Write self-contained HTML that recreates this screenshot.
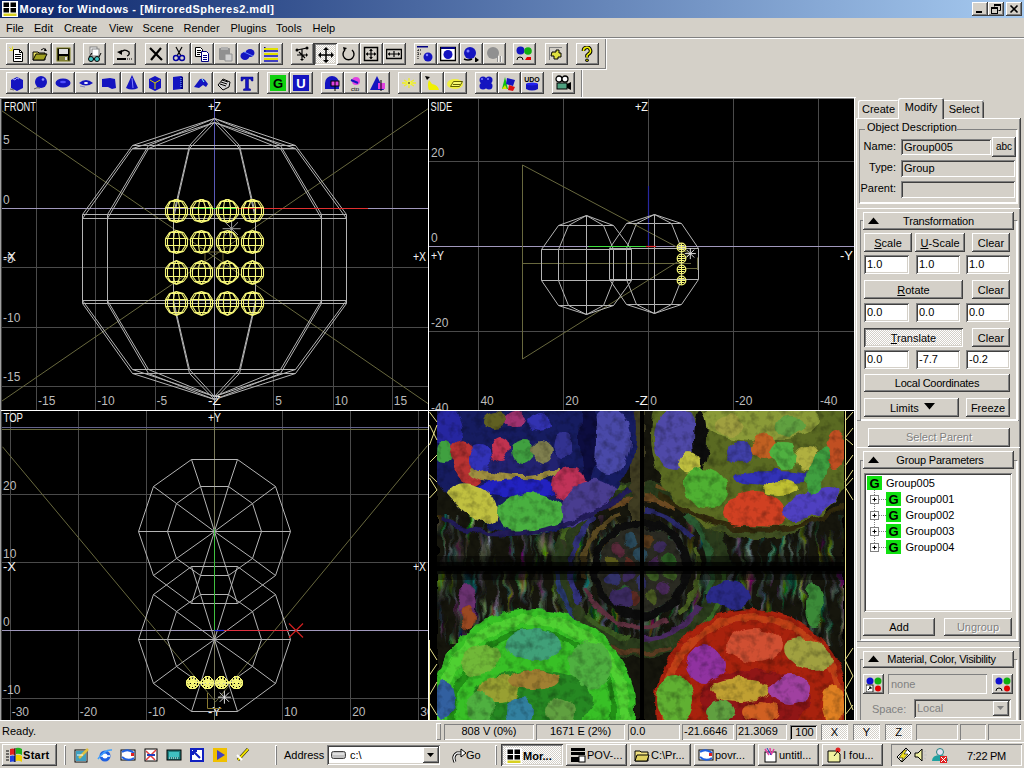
<!DOCTYPE html>
<html><head><meta charset="utf-8"><title>Moray</title>
<style>
html,body{margin:0;padding:0}
body{width:1024px;height:768px;overflow:hidden;background:#d4d0c8;position:relative;font-family:"Liberation Sans",sans-serif;font-size:11px;color:#000}
body>div,body>svg{position:absolute;box-sizing:border-box}
svg{overflow:hidden}
</style></head><body>
<div style="left:0px;top:0px;width:1024px;height:18px;background:linear-gradient(90deg,#0a246a 0%,#a6caf0 100%)"></div>
<svg style="left:2px;top:1px" width="16" height="16" viewBox="0 0 16 16">
<rect x="0" y="0" width="16" height="16" fill="#fff"/>
<rect x="1.5" y="1.5" width="5.5" height="4.5" fill="#000"/><rect x="8.5" y="1.5" width="5.5" height="4.5" fill="#000"/>
<rect x="1.5" y="7" width="5.5" height="4.5" fill="#000"/><rect x="8.5" y="7" width="5.5" height="4.5" fill="#000"/>
<rect x="1.5" y="12.5" width="13" height="2.5" fill="#d8d020"/></svg>
<div style="left:19.5px;top:3.99px;white-space:nowrap;font-size:11px;line-height:11px;color:#fff;font-weight:bold;letter-spacing:0.47px;;">Moray for Windows - [MirroredSpheres2.mdl]</div>
<div style="left:972px;top:2px;width:16px;height:14px;box-shadow:inset -1px -1px #404040,inset 1px 1px #fff,inset -2px -2px #808080;background:#d4d0c8"></div>
<div style="left:988px;top:2px;width:16px;height:14px;box-shadow:inset -1px -1px #404040,inset 1px 1px #fff,inset -2px -2px #808080;background:#d4d0c8"></div>
<div style="left:1006px;top:2px;width:16px;height:14px;box-shadow:inset -1px -1px #404040,inset 1px 1px #fff,inset -2px -2px #808080;background:#d4d0c8"></div>
<svg style="left:972px;top:2px" width="50" height="14"><rect x="4" y="9" width="6" height="2" fill="#000"/><rect x="19.5" y="6.5" width="6" height="5" fill="none" stroke="#000"/><rect x="19" y="5" width="7" height="2" fill="#000"/><path d="M22.5 4.5V3.5h6v5h-2" fill="none" stroke="#000"/><rect x="22" y="2" width="7" height="2" fill="#000"/><path d="M38.5 3.5l7 7M45.5 3.5l-7 7" stroke="#000" stroke-width="1.6"/></svg>
<div style="left:6px;top:22.69px;white-space:nowrap;font-size:11px;line-height:11px;color:#000;;">File</div>
<div style="left:34px;top:22.69px;white-space:nowrap;font-size:11px;line-height:11px;color:#000;;">Edit</div>
<div style="left:64px;top:22.69px;white-space:nowrap;font-size:11px;line-height:11px;color:#000;;">Create</div>
<div style="left:109px;top:22.69px;white-space:nowrap;font-size:11px;line-height:11px;color:#000;;">View</div>
<div style="left:142.5px;top:22.69px;white-space:nowrap;font-size:11px;line-height:11px;color:#000;;">Scene</div>
<div style="left:183.5px;top:22.69px;white-space:nowrap;font-size:11px;line-height:11px;color:#000;;">Render</div>
<div style="left:230.5px;top:22.69px;white-space:nowrap;font-size:11px;line-height:11px;color:#000;;">Plugins</div>
<div style="left:276px;top:22.69px;white-space:nowrap;font-size:11px;line-height:11px;color:#000;;">Tools</div>
<div style="left:312.5px;top:22.69px;white-space:nowrap;font-size:11px;line-height:11px;color:#000;;">Help</div>
<div style="left:0px;top:37px;width:1024px;height:1px;background:#808080"></div>
<div style="left:0px;top:38px;width:1024px;height:1px;background:#fff"></div>
<div style="left:0px;top:68px;width:606px;height:1px;background:#808080"></div>
<div style="left:0px;top:69px;width:607px;height:1px;background:#fff"></div>
<div style="left:605px;top:39px;width:1px;height:30px;background:#808080"></div>
<div style="left:606px;top:39px;width:1px;height:31px;background:#fff"></div>
<div style="left:581px;top:70px;width:1px;height:27px;background:#808080"></div>
<div style="left:582px;top:70px;width:1px;height:27px;background:#fff"></div>
<div style="left:0px;top:97px;width:856px;height:1px;background:#fff"></div>
<div style="left:6px;top:43px;width:23px;height:22px;box-shadow:inset -1px -1px #404040,inset 1px 1px #fff,inset -2px -2px #808080;background:#d4d0c8"></div>
<svg style="left:9px;top:46px" width="16" height="16" viewBox="0 0 16 16"><path d="M4.5 3.5h6l3 3v9h-9z" fill="#fff" stroke="#000"/><path d="M10.5 3.5v3h3" fill="none" stroke="#000"/><path d="M6 8.5h6M6 10.5h6M6 12.5h6" stroke="#000"/><path d="M0.5 1.5l3 3M3.5 0.5v3M0.5 4.5h3" stroke="#e8e020"/></svg>
<div style="left:29px;top:43px;width:23px;height:22px;box-shadow:inset -1px -1px #404040,inset 1px 1px #fff,inset -2px -2px #808080;background:#d4d0c8"></div>
<svg style="left:32px;top:46px" width="16" height="16" viewBox="0 0 16 16"><path d="M1 6h5l1 1h6v7H1z" fill="#e8e060" stroke="#000"/><path d="M1 14l3-6h11l-3 6z" fill="#a0a020" stroke="#000"/><path d="M9 4q3-3 5 0" fill="none" stroke="#000"/><path d="M13 2l2 3h-3z" fill="#000"/></svg>
<div style="left:52px;top:43px;width:23px;height:22px;box-shadow:inset -1px -1px #404040,inset 1px 1px #fff,inset -2px -2px #808080;background:#d4d0c8"></div>
<svg style="left:55px;top:46px" width="16" height="16" viewBox="0 0 16 16"><rect x="2" y="2" width="13" height="13" fill="#000"/><rect x="4" y="3" width="9" height="5" fill="#e0e0e0"/><rect x="4" y="10" width="9" height="5" fill="#808040"/><rect x="10" y="11" width="2" height="3" fill="#e0e0e0"/><rect x="2" y="2" width="13" height="13" fill="none" stroke="#808020"/></svg>
<div style="left:83px;top:43px;width:23px;height:22px;box-shadow:inset -1px -1px #404040,inset 1px 1px #fff,inset -2px -2px #808080;background:#d4d0c8"></div>
<svg style="left:86px;top:46px" width="16" height="16" viewBox="0 0 16 16"><rect x="4" y="1" width="7" height="7" fill="#fff" stroke="#808080"/><rect x="6" y="3" width="7" height="7" fill="#fff" stroke="#808080"/><circle cx="5" cy="13" r="2.5" fill="#40c0c0" stroke="#000"/><circle cx="11" cy="13" r="2.5" fill="#40c0c0" stroke="#000"/><path d="M7 13h2M3 11l3-4M13 11l2-4" stroke="#000"/></svg>
<div style="left:113px;top:43px;width:23px;height:22px;box-shadow:inset -1px -1px #404040,inset 1px 1px #fff,inset -2px -2px #808080;background:#d4d0c8"></div>
<svg style="left:116px;top:46px" width="16" height="16" viewBox="0 0 16 16"><path d="M4 7q4-5 9-1q1 3-2 4" fill="none" stroke="#000" stroke-width="1.3"/><path d="M1 6l5-2v5z" fill="#000"/><rect x="1" y="12" width="9" height="2" fill="#000"/><path d="M11 13h5" stroke="#000" stroke-dasharray="1 1"/></svg>
<div style="left:145px;top:43px;width:23px;height:22px;box-shadow:inset -1px -1px #404040,inset 1px 1px #fff,inset -2px -2px #808080;background:#d4d0c8"></div>
<svg style="left:148px;top:46px" width="16" height="16" viewBox="0 0 16 16"><path d="M2 2l12 12M13 2L3 14" stroke="#000" stroke-width="2.2"/></svg>
<div style="left:168px;top:43px;width:23px;height:22px;box-shadow:inset -1px -1px #404040,inset 1px 1px #fff,inset -2px -2px #808080;background:#d4d0c8"></div>
<svg style="left:171px;top:46px" width="16" height="16" viewBox="0 0 16 16"><path d="M5 1l5 9M11 1l-5 9" stroke="#000" stroke-width="1.2"/><circle cx="5" cy="12" r="2.5" fill="none" stroke="#0000a0" stroke-width="1.4"/><circle cx="11" cy="12" r="2.5" fill="none" stroke="#0000a0" stroke-width="1.4"/></svg>
<div style="left:191px;top:43px;width:23px;height:22px;box-shadow:inset -1px -1px #404040,inset 1px 1px #fff,inset -2px -2px #808080;background:#d4d0c8"></div>
<svg style="left:194px;top:46px" width="16" height="16" viewBox="0 0 16 16"><path d="M1.5 1.5h5l2 2v7h-7z" fill="#fff" stroke="#000"/><path d="M7.5 5.5h5l2 2v8h-7z" fill="#fff" stroke="#000080"/><path d="M9 9.5h4M9 11.5h4M9 13.5h4" stroke="#000080"/><path d="M3 4.5h4M3 6.5h4M3 8.5h3" stroke="#000"/></svg>
<div style="left:214px;top:43px;width:23px;height:22px;box-shadow:inset -1px -1px #404040,inset 1px 1px #fff,inset -2px -2px #808080;background:#d4d0c8"></div>
<svg style="left:217px;top:46px" width="16" height="16" viewBox="0 0 16 16"><rect x="2" y="2" width="11" height="12" rx="1" fill="#909090"/><rect x="4" y="1" width="7" height="3" fill="#b0b0b0"/><path d="M8 8h7v7H8z" fill="#d0d0d0" stroke="#909090"/></svg>
<div style="left:237px;top:43px;width:23px;height:22px;box-shadow:inset -1px -1px #404040,inset 1px 1px #fff,inset -2px -2px #808080;background:#d4d0c8"></div>
<svg style="left:240px;top:46px" width="16" height="16" viewBox="0 0 16 16"><ellipse cx="5" cy="10" rx="4.5" ry="4" fill="#1414c0"/><ellipse cx="10" cy="7" rx="4.5" ry="4" fill="#1414c0"/><path d="M4 6l9 4" stroke="#6080ff"/></svg>
<div style="left:260px;top:43px;width:23px;height:22px;box-shadow:inset -1px -1px #404040,inset 1px 1px #fff,inset -2px -2px #808080;background:#d4d0c8"></div>
<svg style="left:263px;top:46px" width="16" height="16" viewBox="0 0 16 16"><rect x="1" y="1" width="1.5" height="5" fill="#000080"/><path d="M1 3h14M1 8h14M1 13h14" stroke="#e0e000" stroke-width="2"/><path d="M1 5h14M1 10h14M1 15h14" stroke="#1010c0" stroke-width="1.5"/></svg>
<div style="left:291px;top:43px;width:23px;height:22px;box-shadow:inset -1px -1px #404040,inset 1px 1px #fff,inset -2px -2px #808080;background:#d4d0c8"></div>
<svg style="left:294px;top:46px" width="16" height="16" viewBox="0 0 16 16"><path d="M3 4l10-2M8 3v11M3 9h10M5 6l6 6" stroke="#000" stroke-width="1.2"/><circle cx="3" cy="4" r="1.5"/><circle cx="13" cy="2" r="1.5"/><path d="M8 15l-2-2h4zM14 9l-2-2v4z"/></svg>
<div style="left:314px;top:43px;width:23px;height:22px;box-shadow:inset 1px 1px #404040,inset -1px -1px #fff,inset 2px 2px #808080,inset -2px -2px #d4d0c8;background-color:#fff;background-image:linear-gradient(45deg,#d4d0c8 25%,transparent 25%,transparent 75%,#d4d0c8 75%),linear-gradient(45deg,#d4d0c8 25%,transparent 25%,transparent 75%,#d4d0c8 75%);background-size:2px 2px;background-position:0 0,1px 1px"></div>
<svg style="left:318px;top:47px" width="16" height="16" viewBox="0 0 16 16"><path d="M8 1v14M1 8h14" stroke="#000" stroke-width="1.5"/><path d="M8 0l-3 3h6zM8 16l-3-3h6zM0 8l3-3v6zM16 8l-3-3v6z"/></svg>
<div style="left:337px;top:43px;width:23px;height:22px;box-shadow:inset -1px -1px #404040,inset 1px 1px #fff,inset -2px -2px #808080;background:#d4d0c8"></div>
<svg style="left:340px;top:46px" width="16" height="16" viewBox="0 0 16 16"><path d="M5 4A5.5 5.5 0 1 0 12 4" fill="none" stroke="#000" stroke-width="1.4"/><path d="M3 1l4 1-3 3z"/></svg>
<div style="left:360px;top:43px;width:23px;height:22px;box-shadow:inset -1px -1px #404040,inset 1px 1px #fff,inset -2px -2px #808080;background:#d4d0c8"></div>
<svg style="left:363px;top:46px" width="16" height="16" viewBox="0 0 16 16"><rect x="1.5" y="1.5" width="13" height="13" fill="none" stroke="#000" stroke-width="1.5"/><path d="M8 3v10M3 8h10" stroke="#000" stroke-width="1.2"/><path d="M8 3l-2 2h4zM8 13l-2-2h4zM3 8l2-2v4zM13 8l-2-2v4z"/></svg>
<div style="left:383px;top:43px;width:23px;height:22px;box-shadow:inset -1px -1px #404040,inset 1px 1px #fff,inset -2px -2px #808080;background:#d4d0c8"></div>
<svg style="left:386px;top:46px" width="16" height="16" viewBox="0 0 16 16"><rect x="0.5" y="3.5" width="15" height="9" fill="none" stroke="#000" stroke-width="1.5"/><path d="M8 5v6M2 8h12" stroke="#000" stroke-width="1.2"/><path d="M2 8l2-2v4zM14 8l-2-2v4z"/></svg>
<div style="left:414px;top:43px;width:23px;height:22px;box-shadow:inset -1px -1px #404040,inset 1px 1px #fff,inset -2px -2px #808080;background:#d4d0c8"></div>
<svg style="left:417px;top:46px" width="16" height="16" viewBox="0 0 16 16"><rect x="0" y="0" width="11" height="1.5" fill="#000080"/><path d="M1 4h4M1 4v9M1 8h3" stroke="#000" stroke-dasharray="1 1"/><circle cx="11" cy="11" r="4.5" fill="#1414c0"/><circle cx="10" cy="9" r="1.2" fill="#8080ff"/></svg>
<div style="left:437px;top:43px;width:23px;height:22px;box-shadow:inset -1px -1px #404040,inset 1px 1px #fff,inset -2px -2px #808080;background:#d4d0c8"></div>
<svg style="left:440px;top:46px" width="16" height="16" viewBox="0 0 16 16"><rect x="0.5" y="1.5" width="15" height="13" fill="#fff" stroke="#000" stroke-width="1.5"/><rect x="1" y="1" width="14" height="2" fill="#000080"/><circle cx="8" cy="8.5" r="4.5" fill="#1414c0"/></svg>
<div style="left:460px;top:43px;width:23px;height:22px;box-shadow:inset -1px -1px #404040,inset 1px 1px #fff,inset -2px -2px #808080;background:#d4d0c8"></div>
<svg style="left:463px;top:46px" width="16" height="16" viewBox="0 0 16 16"><circle cx="7" cy="7" r="6" fill="#1414c0"/><circle cx="5" cy="5" r="1.5" fill="#8080ff"/><path d="M12 11l4 3-4 3z"/><path d="M1 13q4 2 8 0" stroke="#000" stroke-width="1.5" fill="none"/></svg>
<div style="left:483px;top:43px;width:23px;height:22px;box-shadow:inset -1px -1px #404040,inset 1px 1px #fff,inset -2px -2px #808080;background:#d4d0c8"></div>
<svg style="left:486px;top:46px" width="16" height="16" viewBox="0 0 16 16"><circle cx="7" cy="7" r="6" fill="#909090"/><path d="M12 10v6M15 10v6" stroke="#fff" stroke-width="1.5"/><path d="M11.5 10v6M14.5 10v6" stroke="#909090"/></svg>
<div style="left:513px;top:43px;width:23px;height:22px;box-shadow:inset -1px -1px #404040,inset 1px 1px #fff,inset -2px -2px #808080;background:#d4d0c8"></div>
<svg style="left:516px;top:46px" width="16" height="16" viewBox="0 0 16 16"><circle cx="4.5" cy="4.5" r="4" fill="#1414c0"/><circle cx="12" cy="5" r="3.8" fill="#10b010"/><path d="M1 14a3 3 0 0 1 6 0" fill="none" stroke="#000"/><path d="M9 14l2-3h4v3z" fill="#e00000"/></svg>
<div style="left:545px;top:43px;width:23px;height:22px;box-shadow:inset -1px -1px #404040,inset 1px 1px #fff,inset -2px -2px #808080;background:#d4d0c8"></div>
<svg style="left:548px;top:46px" width="16" height="16" viewBox="0 0 16 16"><rect x="1" y="1" width="13" height="13" fill="#808080"/><rect x="2" y="2" width="13" height="13" fill="#d4d0c8"/><path d="M4 6h4v-2h3v3h2v4h-3v2H6v-3H3z" fill="#e0e040" stroke="#000"/></svg>
<div style="left:576px;top:43px;width:23px;height:22px;box-shadow:inset -1px -1px #404040,inset 1px 1px #fff,inset -2px -2px #808080;background:#d4d0c8"></div>
<svg style="left:579px;top:46px" width="16" height="16" viewBox="0 0 16 16"><path d="M4.5 5a3.5 3.5 0 1 1 5 3l-1.5 1.5v2" fill="none" stroke="#000" stroke-width="3.6"/><path d="M4.5 5a3.5 3.5 0 1 1 5 3l-1.5 1.5v2" fill="none" stroke="#f0f000" stroke-width="1.6"/><circle cx="8" cy="14.2" r="1.8" fill="#000"/><circle cx="8" cy="14.2" r="0.8" fill="#f0f000"/></svg>
<div style="left:6px;top:72px;width:23px;height:22px;box-shadow:inset -1px -1px #404040,inset 1px 1px #fff,inset -2px -2px #808080;background:#d4d0c8"></div>
<svg style="left:9px;top:75px" width="16" height="16" viewBox="0 0 16 16"><path d="M2 5l6-3 6 3v8l-6 3-6-3z" fill="#1414c0"/><path d="M4 4l2 1 2-2 2 1" stroke="#a0a0ff" fill="none"/><path d="M1 14l4 1" stroke="#606060"/></svg>
<div style="left:29px;top:72px;width:23px;height:22px;box-shadow:inset -1px -1px #404040,inset 1px 1px #fff,inset -2px -2px #808080;background:#d4d0c8"></div>
<svg style="left:32px;top:75px" width="16" height="16" viewBox="0 0 16 16"><circle cx="9" cy="7" r="6" fill="#1414c0"/><circle cx="11" cy="4.5" r="1.3" fill="#9090ff"/><path d="M2 14q3-2 6-1" stroke="#606060" fill="none"/></svg>
<div style="left:52px;top:72px;width:23px;height:22px;box-shadow:inset -1px -1px #404040,inset 1px 1px #fff,inset -2px -2px #808080;background:#d4d0c8"></div>
<svg style="left:55px;top:75px" width="16" height="16" viewBox="0 0 16 16"><ellipse cx="8" cy="8" rx="7.5" ry="4.5" fill="#1414c0"/><ellipse cx="8" cy="7" rx="3" ry="1.2" fill="#5050ff"/></svg>
<div style="left:75px;top:72px;width:23px;height:22px;box-shadow:inset -1px -1px #404040,inset 1px 1px #fff,inset -2px -2px #808080;background:#d4d0c8"></div>
<svg style="left:78px;top:75px" width="16" height="16" viewBox="0 0 16 16"><path d="M1 8q7-6 14 0q-7 5-14 0z" fill="#1414c0"/><ellipse cx="8" cy="8" rx="2" ry="1" fill="#fff"/><path d="M2 11l5 1" stroke="#8080c0"/></svg>
<div style="left:98px;top:72px;width:23px;height:22px;box-shadow:inset -1px -1px #404040,inset 1px 1px #fff,inset -2px -2px #808080;background:#d4d0c8"></div>
<svg style="left:101px;top:75px" width="16" height="16" viewBox="0 0 16 16"><path d="M1 4l8-1 5 1 1 9-4 1-4-2-6 0z" fill="#1414c0"/></svg>
<div style="left:121px;top:72px;width:23px;height:22px;box-shadow:inset -1px -1px #404040,inset 1px 1px #fff,inset -2px -2px #808080;background:#d4d0c8"></div>
<svg style="left:124px;top:75px" width="16" height="16" viewBox="0 0 16 16"><path d="M8 0l6 13q-6 3-12 0z" fill="#1414c0"/><path d="M8 3l1 10" stroke="#8080ff"/></svg>
<div style="left:144px;top:72px;width:23px;height:22px;box-shadow:inset -1px -1px #404040,inset 1px 1px #fff,inset -2px -2px #808080;background:#d4d0c8"></div>
<svg style="left:147px;top:75px" width="16" height="16" viewBox="0 0 16 16"><path d="M2 4l6-3 6 3v9l-6 3-6-3z" fill="#1414c0"/><path d="M8 8v6M8 8l5-3M8 8l-5-3" stroke="#d0d000"/></svg>
<div style="left:167px;top:72px;width:23px;height:22px;box-shadow:inset -1px -1px #404040,inset 1px 1px #fff,inset -2px -2px #808080;background:#d4d0c8"></div>
<svg style="left:170px;top:75px" width="16" height="16" viewBox="0 0 16 16"><path d="M3 2l8-1v13l-8 1z" fill="#1414c0"/><path d="M11 1l2 1v12l-2 0" fill="#000080"/><path d="M11 3v10" stroke="#80c0ff" stroke-dasharray="1 1"/></svg>
<div style="left:190px;top:72px;width:23px;height:22px;box-shadow:inset -1px -1px #404040,inset 1px 1px #fff,inset -2px -2px #808080;background:#d4d0c8"></div>
<svg style="left:193px;top:75px" width="16" height="16" viewBox="0 0 16 16"><path d="M1 12l6-8q3-1 5 1l3 4-2 3-3-2-4 3z" fill="#1414c0"/><path d="M9 4l2 3" stroke="#80ffff"/></svg>
<div style="left:213px;top:72px;width:23px;height:22px;box-shadow:inset -1px -1px #404040,inset 1px 1px #fff,inset -2px -2px #808080;background:#d4d0c8"></div>
<svg style="left:216px;top:75px" width="16" height="16" viewBox="0 0 16 16"><path d="M2 10l5-6 7 3-1 5-6 3z" fill="#d0d0d0" stroke="#000"/><path d="M4 9l6 2M5 7l6 2M6 5l6 2" stroke="#000"/></svg>
<div style="left:236px;top:72px;width:23px;height:22px;box-shadow:inset -1px -1px #404040,inset 1px 1px #fff,inset -2px -2px #808080;background:#d4d0c8"></div>
<svg style="left:239px;top:75px" width="16" height="16" viewBox="0 0 16 16"><path d="M2 2h12v4h-1.5l-1-2H9.5v9.5l2 .5v1.5h-7V14l2-.5V4H4.5l-1 2H2z" fill="#1414c0" stroke="#000080" stroke-width=".5"/></svg>
<div style="left:267px;top:72px;width:23px;height:22px;box-shadow:inset -1px -1px #404040,inset 1px 1px #fff,inset -2px -2px #808080;background:#d4d0c8"></div>
<svg style="left:270px;top:75px" width="16" height="16" viewBox="0 0 16 16"><rect x="0" y="0" width="16" height="16" fill="#10d010"/><text x="8" y="13" font-family="Liberation Sans" font-weight="bold" font-size="13" text-anchor="middle" fill="#000">G</text></svg>
<div style="left:290px;top:72px;width:23px;height:22px;box-shadow:inset -1px -1px #404040,inset 1px 1px #fff,inset -2px -2px #808080;background:#d4d0c8"></div>
<svg style="left:293px;top:75px" width="16" height="16" viewBox="0 0 16 16"><rect x="0" y="0" width="16" height="16" fill="#1414c0"/><text x="8" y="13" font-family="Liberation Sans" font-weight="bold" font-size="13" text-anchor="middle" fill="#fff">U</text></svg>
<div style="left:321px;top:72px;width:23px;height:22px;box-shadow:inset -1px -1px #404040,inset 1px 1px #fff,inset -2px -2px #808080;background:#d4d0c8"></div>
<svg style="left:324px;top:75px" width="16" height="16" viewBox="0 0 16 16"><path d="M1 14V8a7 7 0 0 1 14 0v6z" fill="#1414c0"/><rect x="7" y="6" width="8" height="5" fill="#e040e0" stroke="#000"/><path d="M11 6v10" stroke="#000"/></svg>
<div style="left:344px;top:72px;width:23px;height:22px;box-shadow:inset -1px -1px #404040,inset 1px 1px #fff,inset -2px -2px #808080;background:#d4d0c8"></div>
<svg style="left:347px;top:75px" width="16" height="16" viewBox="0 0 16 16"><circle cx="9" cy="6" r="4" fill="#e040e0"/><path d="M4 5l7 3" stroke="#1414c0" stroke-width="2"/><text x="8" y="16" font-size="6" font-family="Liberation Sans" text-anchor="middle">ctp</text></svg>
<div style="left:367px;top:72px;width:23px;height:22px;box-shadow:inset -1px -1px #404040,inset 1px 1px #fff,inset -2px -2px #808080;background:#d4d0c8"></div>
<svg style="left:370px;top:75px" width="16" height="16" viewBox="0 0 16 16"><path d="M7 1l7 14H0z" fill="#1414c0"/><path d="M8 8h7v6H8z" fill="#e040e0"/><path d="M11 5v11" stroke="#000"/></svg>
<div style="left:398px;top:72px;width:23px;height:22px;box-shadow:inset -1px -1px #404040,inset 1px 1px #fff,inset -2px -2px #808080;background:#d4d0c8"></div>
<svg style="left:401px;top:75px" width="16" height="16" viewBox="0 0 16 16"><path d="M8 3v10M1 8h14M3 5l10 6M13 5L3 11" stroke="#f0f020" stroke-width="1.3"/><circle cx="8" cy="8" r="2.5" fill="#f0f060"/><circle cx="8" cy="8" r="0.8" fill="#000"/></svg>
<div style="left:421px;top:72px;width:23px;height:22px;box-shadow:inset -1px -1px #404040,inset 1px 1px #fff,inset -2px -2px #808080;background:#d4d0c8"></div>
<svg style="left:424px;top:75px" width="16" height="16" viewBox="0 0 16 16"><path d="M1 1l5 1-3 3z" fill="#000"/><path d="M5 5l3 4q6 1 7 6H5q-2-5 0-10z" fill="#f0f000"/></svg>
<div style="left:444px;top:72px;width:23px;height:22px;box-shadow:inset -1px -1px #404040,inset 1px 1px #fff,inset -2px -2px #808080;background:#d4d0c8"></div>
<svg style="left:447px;top:75px" width="16" height="16" viewBox="0 0 16 16"><ellipse cx="8" cy="9" rx="8" ry="5" fill="#f0f040"/><path d="M3.5 11.5l3-5h9l-3 5z" fill="#f8f870" stroke="#606000"/><path d="M6 9.5h7" stroke="#606000"/></svg>
<div style="left:475px;top:72px;width:23px;height:22px;box-shadow:inset -1px -1px #404040,inset 1px 1px #fff,inset -2px -2px #808080;background:#d4d0c8"></div>
<svg style="left:478px;top:75px" width="16" height="16" viewBox="0 0 16 16"><circle cx="5" cy="5" r="3.5" fill="#1414c0"/><circle cx="11" cy="5" r="3.5" fill="#1414c0"/><circle cx="5" cy="11" r="3.5" fill="#1414c0"/><circle cx="11" cy="11" r="3.5" fill="#1414c0"/><circle cx="8" cy="8" r="3" fill="#1414c0"/><circle cx="4" cy="4" r="1" fill="#8080ff"/><circle cx="10" cy="4" r="1" fill="#8080ff"/></svg>
<div style="left:498px;top:72px;width:23px;height:22px;box-shadow:inset -1px -1px #404040,inset 1px 1px #fff,inset -2px -2px #808080;background:#d4d0c8"></div>
<svg style="left:501px;top:75px" width="16" height="16" viewBox="0 0 16 16"><path d="M4 2l-3 12h6z" fill="#10c010"/><path d="M6 3l8 2-2 6-7-2z" fill="#1414c0"/><path d="M8 10l6 2-2 4-5-1z" fill="#e01010"/><path d="M1 14l3-4 2 4z" fill="#e0e000"/></svg>
<div style="left:521px;top:72px;width:23px;height:22px;box-shadow:inset -1px -1px #404040,inset 1px 1px #fff,inset -2px -2px #808080;background:#d4d0c8"></div>
<svg style="left:524px;top:75px" width="16" height="16" viewBox="0 0 16 16"><text x="8" y="7" font-size="7" font-weight="bold" font-family="Liberation Sans" text-anchor="middle">UDO</text><path d="M2 9h12v5q-6 3-12 0z" fill="#1414c0"/><ellipse cx="8" cy="9" rx="6" ry="1.5" fill="#2020f0"/></svg>
<div style="left:552px;top:72px;width:23px;height:22px;box-shadow:inset -1px -1px #404040,inset 1px 1px #fff,inset -2px -2px #808080;background:#d4d0c8"></div>
<svg style="left:555px;top:75px" width="16" height="16" viewBox="0 0 16 16"><circle cx="4" cy="4" r="3" fill="#fff" stroke="#000" stroke-width="1.3"/><circle cx="10" cy="4" r="3" fill="#fff" stroke="#000" stroke-width="1.3"/><rect x="2" y="8" width="10" height="6" fill="#50a080" stroke="#000"/><path d="M12 9l4-2v8l-4-2z" fill="#000"/></svg>
<div style="left:0px;top:98px;width:856px;height:1px;background:#808080"></div>
<div style="left:0px;top:99px;width:1px;height:622px;background:#a0a0a0"></div>
<div style="left:1px;top:99px;width:1px;height:622px;background:#404040"></div>
<svg style="left:2px;top:99px" width="426" height="311" viewBox="2 99 426 311" font-family="Liberation Sans" shape-rendering="auto" ><rect x="2" y="99" width="426" height="311" fill="#000"/>
<path d="M36.5 99V410" stroke="#4a4a4a"/>
<path d="M95.5 99V410" stroke="#4a4a4a"/>
<path d="M155.5 99V410" stroke="#4a4a4a"/>
<path d="M273.5 99V410" stroke="#4a4a4a"/>
<path d="M333.5 99V410" stroke="#4a4a4a"/>
<path d="M392.5 99V410" stroke="#4a4a4a"/>
<path d="M1 149.5H428" stroke="#4a4a4a"/>
<path d="M1 267.5H428" stroke="#4a4a4a"/>
<path d="M1 327.5H428" stroke="#4a4a4a"/>
<path d="M1 386.5H428" stroke="#4a4a4a"/>
<path d="M1 208.5H428" stroke="#a098bc"/>
<path d="M214.5 99V208" stroke="#5a5ab8"/>
<path d="M214.5 209V410" stroke="#a0a0b0"/>
<text x="4" y="110.8" font-size="12" fill="#f4f4f4" text-anchor="start" textLength="32" lengthAdjust="spacingAndGlyphs">FRONT</text>
<text x="3" y="144.2" font-size="12" fill="#bcbcbc" text-anchor="start">5</text>
<text x="3" y="203.5" font-size="12" fill="#bcbcbc" text-anchor="start">0</text>
<text x="3" y="262.8" font-size="12" fill="#bcbcbc" text-anchor="start">-5</text>
<text x="3" y="322.1" font-size="12" fill="#bcbcbc" text-anchor="start">-10</text>
<text x="3" y="381.4" font-size="12" fill="#bcbcbc" text-anchor="start">-15</text>
<text x="38.00000000000003" y="405" font-size="12" fill="#bcbcbc" text-anchor="start">-15</text>
<text x="97.30000000000001" y="405" font-size="12" fill="#bcbcbc" text-anchor="start">-10</text>
<text x="156.60000000000002" y="405" font-size="12" fill="#bcbcbc" text-anchor="start">-5</text>
<text x="275.2" y="405" font-size="12" fill="#bcbcbc" text-anchor="start">5</text>
<text x="334.5" y="405" font-size="12" fill="#bcbcbc" text-anchor="start">10</text>
<text x="393.79999999999995" y="405" font-size="12" fill="#bcbcbc" text-anchor="start">15</text>
<text x="208" y="110.8" font-size="12" fill="#f4f4f4" text-anchor="start" textLength="13" lengthAdjust="spacingAndGlyphs">+Z</text>
<text x="208" y="405" font-size="12" fill="#f4f4f4" text-anchor="start" textLength="13" lengthAdjust="spacingAndGlyphs">-Z</text>
<text x="3" y="260.5" font-size="12" fill="#f4f4f4" text-anchor="start" textLength="13" lengthAdjust="spacingAndGlyphs">-X</text>
<text x="413" y="260.5" font-size="12" fill="#f4f4f4" text-anchor="start" textLength="13" lengthAdjust="spacingAndGlyphs">+X</text>
<path d="M2.00 110.91L428.00 403.58" stroke="#68683e" stroke-width="1" />
<path d="M2.00 400.99L428.00 108.75" stroke="#68683e" stroke-width="1" />
<path d="M239.5 373.5L280.5 373.5M280.5 373.5L295.5 373.5M239.5 373.5L189.5 373.5M189.5 373.5L148.5 373.5M148.5 373.5L132.5 373.5M255.5 303.5L321.5 303.5M321.5 303.5L346.5 303.5M255.5 303.5L173.5 303.5M173.5 303.5L107.5 303.5M107.5 303.5L82.5 303.5M255.5 218.5L321.5 218.5M321.5 218.5L346.5 218.5M255.5 218.5L173.5 218.5M173.5 218.5L107.5 218.5M107.5 218.5L82.5 218.5M239.5 148.5L280.5 148.5M280.5 148.5L295.5 148.5M239.5 148.5L189.5 148.5M189.5 148.5L148.5 148.5M148.5 148.5L132.5 148.5M214.5 399.5L239.5 373.5M239.5 373.5L255.5 303.5M255.5 303.5L255.5 218.5M255.5 218.5L239.5 148.5M239.5 148.5L214.5 122.5M214.5 399.5L280.5 373.5M280.5 373.5L321.5 303.5M321.5 303.5L321.5 218.5M321.5 218.5L280.5 148.5M280.5 148.5L214.5 122.5M214.5 399.5L295.5 373.5M295.5 373.5L346.5 303.5M346.5 303.5L346.5 218.5M346.5 218.5L295.5 148.5M295.5 148.5L214.5 122.5M214.5 399.5L189.5 373.5M189.5 373.5L173.5 303.5M173.5 303.5L173.5 218.5M173.5 218.5L189.5 148.5M189.5 148.5L214.5 122.5M214.5 399.5L148.5 373.5M148.5 373.5L107.5 303.5M107.5 303.5L107.5 218.5M107.5 218.5L148.5 148.5M148.5 148.5L214.5 122.5M214.5 399.5L132.5 373.5M132.5 373.5L82.5 303.5M82.5 303.5L82.5 218.5M82.5 218.5L132.5 148.5M132.5 148.5L214.5 122.5M239.5 369.5L280.5 369.5M280.5 369.5L295.5 369.5M239.5 369.5L189.5 369.5M189.5 369.5L148.5 369.5M148.5 369.5L132.5 369.5M255.5 300.5L321.5 300.5M321.5 300.5L346.5 300.5M255.5 300.5L173.5 300.5M173.5 300.5L107.5 300.5M107.5 300.5L82.5 300.5M255.5 214.5L321.5 214.5M321.5 214.5L346.5 214.5M255.5 214.5L173.5 214.5M173.5 214.5L107.5 214.5M107.5 214.5L82.5 214.5M239.5 145.5L280.5 145.5M280.5 145.5L295.5 145.5M239.5 145.5L189.5 145.5M189.5 145.5L148.5 145.5M148.5 145.5L132.5 145.5M214.5 396.5L239.5 369.5M239.5 369.5L255.5 300.5M255.5 300.5L255.5 214.5M255.5 214.5L239.5 145.5M239.5 145.5L214.5 118.5M214.5 396.5L280.5 369.5M280.5 369.5L321.5 300.5M321.5 300.5L321.5 214.5M321.5 214.5L280.5 145.5M280.5 145.5L214.5 118.5M214.5 396.5L295.5 369.5M295.5 369.5L346.5 300.5M346.5 300.5L346.5 214.5M346.5 214.5L295.5 145.5M295.5 145.5L214.5 118.5M214.5 396.5L189.5 369.5M189.5 369.5L173.5 300.5M173.5 300.5L173.5 214.5M173.5 214.5L189.5 145.5M189.5 145.5L214.5 118.5M214.5 396.5L148.5 369.5M148.5 369.5L107.5 300.5M107.5 300.5L107.5 214.5M107.5 214.5L148.5 145.5M148.5 145.5L214.5 118.5M214.5 396.5L132.5 369.5M132.5 369.5L82.5 300.5M82.5 300.5L82.5 214.5M82.5 214.5L132.5 145.5M132.5 145.5L214.5 118.5" stroke="#b4b4b4" stroke-width="1" fill="none"/>
<path d="M196.00 208.50L237.00 208.50" stroke="#40e040" stroke-width="1.2" />
<path d="M237.00 208.50L368.00 208.50" stroke="#e03030" stroke-width="1.2" />
<path d="M222.6 228.7L240.6 228.7M225.2 222.3L238.0 235.0M231.6 219.7L231.6 237.7M238.0 222.3L225.2 235.0" stroke="#a0a0a0" stroke-width="1"/>
<path d="M205 252h18v16h-18z" stroke="#6a6030" fill="none"/>
<path d="M178.5 220.5L181.5 220.5M181.5 220.5L183.5 220.5M178.5 220.5L174.5 220.5M174.5 220.5L170.5 220.5M170.5 220.5L169.5 220.5M179.5 214.5L185.5 214.5M185.5 214.5L187.5 214.5M179.5 214.5L173.5 214.5M173.5 214.5L167.5 214.5M167.5 214.5L165.5 214.5M179.5 207.5L185.5 207.5M185.5 207.5L187.5 207.5M179.5 207.5L173.5 207.5M173.5 207.5L167.5 207.5M167.5 207.5L165.5 207.5M178.5 201.5L181.5 201.5M181.5 201.5L183.5 201.5M178.5 201.5L174.5 201.5M174.5 201.5L170.5 201.5M170.5 201.5L169.5 201.5M176.5 222.5L178.5 220.5M178.5 220.5L179.5 214.5M179.5 214.5L179.5 207.5M179.5 207.5L178.5 201.5M178.5 201.5L176.5 199.5M176.5 222.5L181.5 220.5M181.5 220.5L185.5 214.5M185.5 214.5L185.5 207.5M185.5 207.5L181.5 201.5M181.5 201.5L176.5 199.5M176.5 222.5L183.5 220.5M183.5 220.5L187.5 214.5M187.5 214.5L187.5 207.5M187.5 207.5L183.5 201.5M183.5 201.5L176.5 199.5M176.5 222.5L174.5 220.5M174.5 220.5L173.5 214.5M173.5 214.5L173.5 207.5M173.5 207.5L174.5 201.5M174.5 201.5L176.5 199.5M176.5 222.5L170.5 220.5M170.5 220.5L167.5 214.5M167.5 214.5L167.5 207.5M167.5 207.5L170.5 201.5M170.5 201.5L176.5 199.5M176.5 222.5L169.5 220.5M169.5 220.5L165.5 214.5M165.5 214.5L165.5 207.5M165.5 207.5L169.5 201.5M169.5 201.5L176.5 199.5M203.5 220.5L207.5 220.5M207.5 220.5L208.5 220.5M203.5 220.5L199.5 220.5M199.5 220.5L196.5 220.5M196.5 220.5L194.5 220.5M205.5 214.5L210.5 214.5M210.5 214.5L212.5 214.5M205.5 214.5L198.5 214.5M198.5 214.5L192.5 214.5M192.5 214.5L190.5 214.5M205.5 207.5L210.5 207.5M210.5 207.5L212.5 207.5M205.5 207.5L198.5 207.5M198.5 207.5L192.5 207.5M192.5 207.5L190.5 207.5M203.5 201.5L207.5 201.5M207.5 201.5L208.5 201.5M203.5 201.5L199.5 201.5M199.5 201.5L196.5 201.5M196.5 201.5L194.5 201.5M201.5 222.5L203.5 220.5M203.5 220.5L205.5 214.5M205.5 214.5L205.5 207.5M205.5 207.5L203.5 201.5M203.5 201.5L201.5 199.5M201.5 222.5L207.5 220.5M207.5 220.5L210.5 214.5M210.5 214.5L210.5 207.5M210.5 207.5L207.5 201.5M207.5 201.5L201.5 199.5M201.5 222.5L208.5 220.5M208.5 220.5L212.5 214.5M212.5 214.5L212.5 207.5M212.5 207.5L208.5 201.5M208.5 201.5L201.5 199.5M201.5 222.5L199.5 220.5M199.5 220.5L198.5 214.5M198.5 214.5L198.5 207.5M198.5 207.5L199.5 201.5M199.5 201.5L201.5 199.5M201.5 222.5L196.5 220.5M196.5 220.5L192.5 214.5M192.5 214.5L192.5 207.5M192.5 207.5L196.5 201.5M196.5 201.5L201.5 199.5M201.5 222.5L194.5 220.5M194.5 220.5L190.5 214.5M190.5 214.5L190.5 207.5M190.5 207.5L194.5 201.5M194.5 201.5L201.5 199.5M229.5 220.5L232.5 220.5M232.5 220.5L233.5 220.5M229.5 220.5L224.5 220.5M224.5 220.5L221.5 220.5M221.5 220.5L220.5 220.5M230.5 214.5L236.5 214.5M236.5 214.5L238.5 214.5M230.5 214.5L223.5 214.5M223.5 214.5L218.5 214.5M218.5 214.5L216.5 214.5M230.5 207.5L236.5 207.5M236.5 207.5L238.5 207.5M230.5 207.5L223.5 207.5M223.5 207.5L218.5 207.5M218.5 207.5L216.5 207.5M229.5 201.5L232.5 201.5M232.5 201.5L233.5 201.5M229.5 201.5L224.5 201.5M224.5 201.5L221.5 201.5M221.5 201.5L220.5 201.5M227.5 222.5L229.5 220.5M229.5 220.5L230.5 214.5M230.5 214.5L230.5 207.5M230.5 207.5L229.5 201.5M229.5 201.5L227.5 199.5M227.5 222.5L232.5 220.5M232.5 220.5L236.5 214.5M236.5 214.5L236.5 207.5M236.5 207.5L232.5 201.5M232.5 201.5L227.5 199.5M227.5 222.5L233.5 220.5M233.5 220.5L238.5 214.5M238.5 214.5L238.5 207.5M238.5 207.5L233.5 201.5M233.5 201.5L227.5 199.5M227.5 222.5L224.5 220.5M224.5 220.5L223.5 214.5M223.5 214.5L223.5 207.5M223.5 207.5L224.5 201.5M224.5 201.5L227.5 199.5M227.5 222.5L221.5 220.5M221.5 220.5L218.5 214.5M218.5 214.5L218.5 207.5M218.5 207.5L221.5 201.5M221.5 201.5L227.5 199.5M227.5 222.5L220.5 220.5M220.5 220.5L216.5 214.5M216.5 214.5L216.5 207.5M216.5 207.5L220.5 201.5M220.5 201.5L227.5 199.5M254.5 220.5L257.5 220.5M257.5 220.5L259.5 220.5M254.5 220.5L250.5 220.5M250.5 220.5L246.5 220.5M246.5 220.5L245.5 220.5M255.5 214.5L261.5 214.5M261.5 214.5L263.5 214.5M255.5 214.5L248.5 214.5M248.5 214.5L243.5 214.5M243.5 214.5L241.5 214.5M255.5 207.5L261.5 207.5M261.5 207.5L263.5 207.5M255.5 207.5L248.5 207.5M248.5 207.5L243.5 207.5M243.5 207.5L241.5 207.5M254.5 201.5L257.5 201.5M257.5 201.5L259.5 201.5M254.5 201.5L250.5 201.5M250.5 201.5L246.5 201.5M246.5 201.5L245.5 201.5M252.5 222.5L254.5 220.5M254.5 220.5L255.5 214.5M255.5 214.5L255.5 207.5M255.5 207.5L254.5 201.5M254.5 201.5L252.5 199.5M252.5 222.5L257.5 220.5M257.5 220.5L261.5 214.5M261.5 214.5L261.5 207.5M261.5 207.5L257.5 201.5M257.5 201.5L252.5 199.5M252.5 222.5L259.5 220.5M259.5 220.5L263.5 214.5M263.5 214.5L263.5 207.5M263.5 207.5L259.5 201.5M259.5 201.5L252.5 199.5M252.5 222.5L250.5 220.5M250.5 220.5L248.5 214.5M248.5 214.5L248.5 207.5M248.5 207.5L250.5 201.5M250.5 201.5L252.5 199.5M252.5 222.5L246.5 220.5M246.5 220.5L243.5 214.5M243.5 214.5L243.5 207.5M243.5 207.5L246.5 201.5M246.5 201.5L252.5 199.5M252.5 222.5L245.5 220.5M245.5 220.5L241.5 214.5M241.5 214.5L241.5 207.5M241.5 207.5L245.5 201.5M245.5 201.5L252.5 199.5M178.5 251.5L181.5 251.5M181.5 251.5L183.5 251.5M178.5 251.5L174.5 251.5M174.5 251.5L170.5 251.5M170.5 251.5L169.5 251.5M179.5 245.5L185.5 245.5M185.5 245.5L187.5 245.5M179.5 245.5L173.5 245.5M173.5 245.5L167.5 245.5M167.5 245.5L165.5 245.5M179.5 238.5L185.5 238.5M185.5 238.5L187.5 238.5M179.5 238.5L173.5 238.5M173.5 238.5L167.5 238.5M167.5 238.5L165.5 238.5M178.5 232.5L181.5 232.5M181.5 232.5L183.5 232.5M178.5 232.5L174.5 232.5M174.5 232.5L170.5 232.5M170.5 232.5L169.5 232.5M176.5 253.5L178.5 251.5M178.5 251.5L179.5 245.5M179.5 245.5L179.5 238.5M179.5 238.5L178.5 232.5M178.5 232.5L176.5 230.5M176.5 253.5L181.5 251.5M181.5 251.5L185.5 245.5M185.5 245.5L185.5 238.5M185.5 238.5L181.5 232.5M181.5 232.5L176.5 230.5M176.5 253.5L183.5 251.5M183.5 251.5L187.5 245.5M187.5 245.5L187.5 238.5M187.5 238.5L183.5 232.5M183.5 232.5L176.5 230.5M176.5 253.5L174.5 251.5M174.5 251.5L173.5 245.5M173.5 245.5L173.5 238.5M173.5 238.5L174.5 232.5M174.5 232.5L176.5 230.5M176.5 253.5L170.5 251.5M170.5 251.5L167.5 245.5M167.5 245.5L167.5 238.5M167.5 238.5L170.5 232.5M170.5 232.5L176.5 230.5M176.5 253.5L169.5 251.5M169.5 251.5L165.5 245.5M165.5 245.5L165.5 238.5M165.5 238.5L169.5 232.5M169.5 232.5L176.5 230.5M203.5 251.5L207.5 251.5M207.5 251.5L208.5 251.5M203.5 251.5L199.5 251.5M199.5 251.5L196.5 251.5M196.5 251.5L194.5 251.5M205.5 245.5L210.5 245.5M210.5 245.5L212.5 245.5M205.5 245.5L198.5 245.5M198.5 245.5L192.5 245.5M192.5 245.5L190.5 245.5M205.5 238.5L210.5 238.5M210.5 238.5L212.5 238.5M205.5 238.5L198.5 238.5M198.5 238.5L192.5 238.5M192.5 238.5L190.5 238.5M203.5 232.5L207.5 232.5M207.5 232.5L208.5 232.5M203.5 232.5L199.5 232.5M199.5 232.5L196.5 232.5M196.5 232.5L194.5 232.5M201.5 253.5L203.5 251.5M203.5 251.5L205.5 245.5M205.5 245.5L205.5 238.5M205.5 238.5L203.5 232.5M203.5 232.5L201.5 230.5M201.5 253.5L207.5 251.5M207.5 251.5L210.5 245.5M210.5 245.5L210.5 238.5M210.5 238.5L207.5 232.5M207.5 232.5L201.5 230.5M201.5 253.5L208.5 251.5M208.5 251.5L212.5 245.5M212.5 245.5L212.5 238.5M212.5 238.5L208.5 232.5M208.5 232.5L201.5 230.5M201.5 253.5L199.5 251.5M199.5 251.5L198.5 245.5M198.5 245.5L198.5 238.5M198.5 238.5L199.5 232.5M199.5 232.5L201.5 230.5M201.5 253.5L196.5 251.5M196.5 251.5L192.5 245.5M192.5 245.5L192.5 238.5M192.5 238.5L196.5 232.5M196.5 232.5L201.5 230.5M201.5 253.5L194.5 251.5M194.5 251.5L190.5 245.5M190.5 245.5L190.5 238.5M190.5 238.5L194.5 232.5M194.5 232.5L201.5 230.5M229.5 251.5L232.5 251.5M232.5 251.5L233.5 251.5M229.5 251.5L224.5 251.5M224.5 251.5L221.5 251.5M221.5 251.5L220.5 251.5M230.5 245.5L236.5 245.5M236.5 245.5L238.5 245.5M230.5 245.5L223.5 245.5M223.5 245.5L218.5 245.5M218.5 245.5L216.5 245.5M230.5 238.5L236.5 238.5M236.5 238.5L238.5 238.5M230.5 238.5L223.5 238.5M223.5 238.5L218.5 238.5M218.5 238.5L216.5 238.5M229.5 232.5L232.5 232.5M232.5 232.5L233.5 232.5M229.5 232.5L224.5 232.5M224.5 232.5L221.5 232.5M221.5 232.5L220.5 232.5M227.5 253.5L229.5 251.5M229.5 251.5L230.5 245.5M230.5 245.5L230.5 238.5M230.5 238.5L229.5 232.5M229.5 232.5L227.5 230.5M227.5 253.5L232.5 251.5M232.5 251.5L236.5 245.5M236.5 245.5L236.5 238.5M236.5 238.5L232.5 232.5M232.5 232.5L227.5 230.5M227.5 253.5L233.5 251.5M233.5 251.5L238.5 245.5M238.5 245.5L238.5 238.5M238.5 238.5L233.5 232.5M233.5 232.5L227.5 230.5M227.5 253.5L224.5 251.5M224.5 251.5L223.5 245.5M223.5 245.5L223.5 238.5M223.5 238.5L224.5 232.5M224.5 232.5L227.5 230.5M227.5 253.5L221.5 251.5M221.5 251.5L218.5 245.5M218.5 245.5L218.5 238.5M218.5 238.5L221.5 232.5M221.5 232.5L227.5 230.5M227.5 253.5L220.5 251.5M220.5 251.5L216.5 245.5M216.5 245.5L216.5 238.5M216.5 238.5L220.5 232.5M220.5 232.5L227.5 230.5M254.5 251.5L257.5 251.5M257.5 251.5L259.5 251.5M254.5 251.5L250.5 251.5M250.5 251.5L246.5 251.5M246.5 251.5L245.5 251.5M255.5 245.5L261.5 245.5M261.5 245.5L263.5 245.5M255.5 245.5L248.5 245.5M248.5 245.5L243.5 245.5M243.5 245.5L241.5 245.5M255.5 238.5L261.5 238.5M261.5 238.5L263.5 238.5M255.5 238.5L248.5 238.5M248.5 238.5L243.5 238.5M243.5 238.5L241.5 238.5M254.5 232.5L257.5 232.5M257.5 232.5L259.5 232.5M254.5 232.5L250.5 232.5M250.5 232.5L246.5 232.5M246.5 232.5L245.5 232.5M252.5 253.5L254.5 251.5M254.5 251.5L255.5 245.5M255.5 245.5L255.5 238.5M255.5 238.5L254.5 232.5M254.5 232.5L252.5 230.5M252.5 253.5L257.5 251.5M257.5 251.5L261.5 245.5M261.5 245.5L261.5 238.5M261.5 238.5L257.5 232.5M257.5 232.5L252.5 230.5M252.5 253.5L259.5 251.5M259.5 251.5L263.5 245.5M263.5 245.5L263.5 238.5M263.5 238.5L259.5 232.5M259.5 232.5L252.5 230.5M252.5 253.5L250.5 251.5M250.5 251.5L248.5 245.5M248.5 245.5L248.5 238.5M248.5 238.5L250.5 232.5M250.5 232.5L252.5 230.5M252.5 253.5L246.5 251.5M246.5 251.5L243.5 245.5M243.5 245.5L243.5 238.5M243.5 238.5L246.5 232.5M246.5 232.5L252.5 230.5M252.5 253.5L245.5 251.5M245.5 251.5L241.5 245.5M241.5 245.5L241.5 238.5M241.5 238.5L245.5 232.5M245.5 232.5L252.5 230.5M178.5 281.5L181.5 281.5M181.5 281.5L183.5 281.5M178.5 281.5L174.5 281.5M174.5 281.5L170.5 281.5M170.5 281.5L169.5 281.5M179.5 276.5L185.5 276.5M185.5 276.5L187.5 276.5M179.5 276.5L173.5 276.5M173.5 276.5L167.5 276.5M167.5 276.5L165.5 276.5M179.5 268.5L185.5 268.5M185.5 268.5L187.5 268.5M179.5 268.5L173.5 268.5M173.5 268.5L167.5 268.5M167.5 268.5L165.5 268.5M178.5 263.5L181.5 263.5M181.5 263.5L183.5 263.5M178.5 263.5L174.5 263.5M174.5 263.5L170.5 263.5M170.5 263.5L169.5 263.5M176.5 284.5L178.5 281.5M178.5 281.5L179.5 276.5M179.5 276.5L179.5 268.5M179.5 268.5L178.5 263.5M178.5 263.5L176.5 260.5M176.5 284.5L181.5 281.5M181.5 281.5L185.5 276.5M185.5 276.5L185.5 268.5M185.5 268.5L181.5 263.5M181.5 263.5L176.5 260.5M176.5 284.5L183.5 281.5M183.5 281.5L187.5 276.5M187.5 276.5L187.5 268.5M187.5 268.5L183.5 263.5M183.5 263.5L176.5 260.5M176.5 284.5L174.5 281.5M174.5 281.5L173.5 276.5M173.5 276.5L173.5 268.5M173.5 268.5L174.5 263.5M174.5 263.5L176.5 260.5M176.5 284.5L170.5 281.5M170.5 281.5L167.5 276.5M167.5 276.5L167.5 268.5M167.5 268.5L170.5 263.5M170.5 263.5L176.5 260.5M176.5 284.5L169.5 281.5M169.5 281.5L165.5 276.5M165.5 276.5L165.5 268.5M165.5 268.5L169.5 263.5M169.5 263.5L176.5 260.5M203.5 281.5L207.5 281.5M207.5 281.5L208.5 281.5M203.5 281.5L199.5 281.5M199.5 281.5L196.5 281.5M196.5 281.5L194.5 281.5M205.5 276.5L210.5 276.5M210.5 276.5L212.5 276.5M205.5 276.5L198.5 276.5M198.5 276.5L192.5 276.5M192.5 276.5L190.5 276.5M205.5 268.5L210.5 268.5M210.5 268.5L212.5 268.5M205.5 268.5L198.5 268.5M198.5 268.5L192.5 268.5M192.5 268.5L190.5 268.5M203.5 263.5L207.5 263.5M207.5 263.5L208.5 263.5M203.5 263.5L199.5 263.5M199.5 263.5L196.5 263.5M196.5 263.5L194.5 263.5M201.5 284.5L203.5 281.5M203.5 281.5L205.5 276.5M205.5 276.5L205.5 268.5M205.5 268.5L203.5 263.5M203.5 263.5L201.5 260.5M201.5 284.5L207.5 281.5M207.5 281.5L210.5 276.5M210.5 276.5L210.5 268.5M210.5 268.5L207.5 263.5M207.5 263.5L201.5 260.5M201.5 284.5L208.5 281.5M208.5 281.5L212.5 276.5M212.5 276.5L212.5 268.5M212.5 268.5L208.5 263.5M208.5 263.5L201.5 260.5M201.5 284.5L199.5 281.5M199.5 281.5L198.5 276.5M198.5 276.5L198.5 268.5M198.5 268.5L199.5 263.5M199.5 263.5L201.5 260.5M201.5 284.5L196.5 281.5M196.5 281.5L192.5 276.5M192.5 276.5L192.5 268.5M192.5 268.5L196.5 263.5M196.5 263.5L201.5 260.5M201.5 284.5L194.5 281.5M194.5 281.5L190.5 276.5M190.5 276.5L190.5 268.5M190.5 268.5L194.5 263.5M194.5 263.5L201.5 260.5M229.5 281.5L232.5 281.5M232.5 281.5L233.5 281.5M229.5 281.5L224.5 281.5M224.5 281.5L221.5 281.5M221.5 281.5L220.5 281.5M230.5 276.5L236.5 276.5M236.5 276.5L238.5 276.5M230.5 276.5L223.5 276.5M223.5 276.5L218.5 276.5M218.5 276.5L216.5 276.5M230.5 268.5L236.5 268.5M236.5 268.5L238.5 268.5M230.5 268.5L223.5 268.5M223.5 268.5L218.5 268.5M218.5 268.5L216.5 268.5M229.5 263.5L232.5 263.5M232.5 263.5L233.5 263.5M229.5 263.5L224.5 263.5M224.5 263.5L221.5 263.5M221.5 263.5L220.5 263.5M227.5 284.5L229.5 281.5M229.5 281.5L230.5 276.5M230.5 276.5L230.5 268.5M230.5 268.5L229.5 263.5M229.5 263.5L227.5 260.5M227.5 284.5L232.5 281.5M232.5 281.5L236.5 276.5M236.5 276.5L236.5 268.5M236.5 268.5L232.5 263.5M232.5 263.5L227.5 260.5M227.5 284.5L233.5 281.5M233.5 281.5L238.5 276.5M238.5 276.5L238.5 268.5M238.5 268.5L233.5 263.5M233.5 263.5L227.5 260.5M227.5 284.5L224.5 281.5M224.5 281.5L223.5 276.5M223.5 276.5L223.5 268.5M223.5 268.5L224.5 263.5M224.5 263.5L227.5 260.5M227.5 284.5L221.5 281.5M221.5 281.5L218.5 276.5M218.5 276.5L218.5 268.5M218.5 268.5L221.5 263.5M221.5 263.5L227.5 260.5M227.5 284.5L220.5 281.5M220.5 281.5L216.5 276.5M216.5 276.5L216.5 268.5M216.5 268.5L220.5 263.5M220.5 263.5L227.5 260.5M254.5 281.5L257.5 281.5M257.5 281.5L259.5 281.5M254.5 281.5L250.5 281.5M250.5 281.5L246.5 281.5M246.5 281.5L245.5 281.5M255.5 276.5L261.5 276.5M261.5 276.5L263.5 276.5M255.5 276.5L248.5 276.5M248.5 276.5L243.5 276.5M243.5 276.5L241.5 276.5M255.5 268.5L261.5 268.5M261.5 268.5L263.5 268.5M255.5 268.5L248.5 268.5M248.5 268.5L243.5 268.5M243.5 268.5L241.5 268.5M254.5 263.5L257.5 263.5M257.5 263.5L259.5 263.5M254.5 263.5L250.5 263.5M250.5 263.5L246.5 263.5M246.5 263.5L245.5 263.5M252.5 284.5L254.5 281.5M254.5 281.5L255.5 276.5M255.5 276.5L255.5 268.5M255.5 268.5L254.5 263.5M254.5 263.5L252.5 260.5M252.5 284.5L257.5 281.5M257.5 281.5L261.5 276.5M261.5 276.5L261.5 268.5M261.5 268.5L257.5 263.5M257.5 263.5L252.5 260.5M252.5 284.5L259.5 281.5M259.5 281.5L263.5 276.5M263.5 276.5L263.5 268.5M263.5 268.5L259.5 263.5M259.5 263.5L252.5 260.5M252.5 284.5L250.5 281.5M250.5 281.5L248.5 276.5M248.5 276.5L248.5 268.5M248.5 268.5L250.5 263.5M250.5 263.5L252.5 260.5M252.5 284.5L246.5 281.5M246.5 281.5L243.5 276.5M243.5 276.5L243.5 268.5M243.5 268.5L246.5 263.5M246.5 263.5L252.5 260.5M252.5 284.5L245.5 281.5M245.5 281.5L241.5 276.5M241.5 276.5L241.5 268.5M241.5 268.5L245.5 263.5M245.5 263.5L252.5 260.5M178.5 312.5L181.5 312.5M181.5 312.5L183.5 312.5M178.5 312.5L174.5 312.5M174.5 312.5L170.5 312.5M170.5 312.5L169.5 312.5M179.5 306.5L185.5 306.5M185.5 306.5L187.5 306.5M179.5 306.5L173.5 306.5M173.5 306.5L167.5 306.5M167.5 306.5L165.5 306.5M179.5 299.5L185.5 299.5M185.5 299.5L187.5 299.5M179.5 299.5L173.5 299.5M173.5 299.5L167.5 299.5M167.5 299.5L165.5 299.5M178.5 293.5L181.5 293.5M181.5 293.5L183.5 293.5M178.5 293.5L174.5 293.5M174.5 293.5L170.5 293.5M170.5 293.5L169.5 293.5M176.5 315.5L178.5 312.5M178.5 312.5L179.5 306.5M179.5 306.5L179.5 299.5M179.5 299.5L178.5 293.5M178.5 293.5L176.5 291.5M176.5 315.5L181.5 312.5M181.5 312.5L185.5 306.5M185.5 306.5L185.5 299.5M185.5 299.5L181.5 293.5M181.5 293.5L176.5 291.5M176.5 315.5L183.5 312.5M183.5 312.5L187.5 306.5M187.5 306.5L187.5 299.5M187.5 299.5L183.5 293.5M183.5 293.5L176.5 291.5M176.5 315.5L174.5 312.5M174.5 312.5L173.5 306.5M173.5 306.5L173.5 299.5M173.5 299.5L174.5 293.5M174.5 293.5L176.5 291.5M176.5 315.5L170.5 312.5M170.5 312.5L167.5 306.5M167.5 306.5L167.5 299.5M167.5 299.5L170.5 293.5M170.5 293.5L176.5 291.5M176.5 315.5L169.5 312.5M169.5 312.5L165.5 306.5M165.5 306.5L165.5 299.5M165.5 299.5L169.5 293.5M169.5 293.5L176.5 291.5M203.5 312.5L207.5 312.5M207.5 312.5L208.5 312.5M203.5 312.5L199.5 312.5M199.5 312.5L196.5 312.5M196.5 312.5L194.5 312.5M205.5 306.5L210.5 306.5M210.5 306.5L212.5 306.5M205.5 306.5L198.5 306.5M198.5 306.5L192.5 306.5M192.5 306.5L190.5 306.5M205.5 299.5L210.5 299.5M210.5 299.5L212.5 299.5M205.5 299.5L198.5 299.5M198.5 299.5L192.5 299.5M192.5 299.5L190.5 299.5M203.5 293.5L207.5 293.5M207.5 293.5L208.5 293.5M203.5 293.5L199.5 293.5M199.5 293.5L196.5 293.5M196.5 293.5L194.5 293.5M201.5 315.5L203.5 312.5M203.5 312.5L205.5 306.5M205.5 306.5L205.5 299.5M205.5 299.5L203.5 293.5M203.5 293.5L201.5 291.5M201.5 315.5L207.5 312.5M207.5 312.5L210.5 306.5M210.5 306.5L210.5 299.5M210.5 299.5L207.5 293.5M207.5 293.5L201.5 291.5M201.5 315.5L208.5 312.5M208.5 312.5L212.5 306.5M212.5 306.5L212.5 299.5M212.5 299.5L208.5 293.5M208.5 293.5L201.5 291.5M201.5 315.5L199.5 312.5M199.5 312.5L198.5 306.5M198.5 306.5L198.5 299.5M198.5 299.5L199.5 293.5M199.5 293.5L201.5 291.5M201.5 315.5L196.5 312.5M196.5 312.5L192.5 306.5M192.5 306.5L192.5 299.5M192.5 299.5L196.5 293.5M196.5 293.5L201.5 291.5M201.5 315.5L194.5 312.5M194.5 312.5L190.5 306.5M190.5 306.5L190.5 299.5M190.5 299.5L194.5 293.5M194.5 293.5L201.5 291.5M229.5 312.5L232.5 312.5M232.5 312.5L233.5 312.5M229.5 312.5L224.5 312.5M224.5 312.5L221.5 312.5M221.5 312.5L220.5 312.5M230.5 306.5L236.5 306.5M236.5 306.5L238.5 306.5M230.5 306.5L223.5 306.5M223.5 306.5L218.5 306.5M218.5 306.5L216.5 306.5M230.5 299.5L236.5 299.5M236.5 299.5L238.5 299.5M230.5 299.5L223.5 299.5M223.5 299.5L218.5 299.5M218.5 299.5L216.5 299.5M229.5 293.5L232.5 293.5M232.5 293.5L233.5 293.5M229.5 293.5L224.5 293.5M224.5 293.5L221.5 293.5M221.5 293.5L220.5 293.5M227.5 315.5L229.5 312.5M229.5 312.5L230.5 306.5M230.5 306.5L230.5 299.5M230.5 299.5L229.5 293.5M229.5 293.5L227.5 291.5M227.5 315.5L232.5 312.5M232.5 312.5L236.5 306.5M236.5 306.5L236.5 299.5M236.5 299.5L232.5 293.5M232.5 293.5L227.5 291.5M227.5 315.5L233.5 312.5M233.5 312.5L238.5 306.5M238.5 306.5L238.5 299.5M238.5 299.5L233.5 293.5M233.5 293.5L227.5 291.5M227.5 315.5L224.5 312.5M224.5 312.5L223.5 306.5M223.5 306.5L223.5 299.5M223.5 299.5L224.5 293.5M224.5 293.5L227.5 291.5M227.5 315.5L221.5 312.5M221.5 312.5L218.5 306.5M218.5 306.5L218.5 299.5M218.5 299.5L221.5 293.5M221.5 293.5L227.5 291.5M227.5 315.5L220.5 312.5M220.5 312.5L216.5 306.5M216.5 306.5L216.5 299.5M216.5 299.5L220.5 293.5M220.5 293.5L227.5 291.5M254.5 312.5L257.5 312.5M257.5 312.5L259.5 312.5M254.5 312.5L250.5 312.5M250.5 312.5L246.5 312.5M246.5 312.5L245.5 312.5M255.5 306.5L261.5 306.5M261.5 306.5L263.5 306.5M255.5 306.5L248.5 306.5M248.5 306.5L243.5 306.5M243.5 306.5L241.5 306.5M255.5 299.5L261.5 299.5M261.5 299.5L263.5 299.5M255.5 299.5L248.5 299.5M248.5 299.5L243.5 299.5M243.5 299.5L241.5 299.5M254.5 293.5L257.5 293.5M257.5 293.5L259.5 293.5M254.5 293.5L250.5 293.5M250.5 293.5L246.5 293.5M246.5 293.5L245.5 293.5M252.5 315.5L254.5 312.5M254.5 312.5L255.5 306.5M255.5 306.5L255.5 299.5M255.5 299.5L254.5 293.5M254.5 293.5L252.5 291.5M252.5 315.5L257.5 312.5M257.5 312.5L261.5 306.5M261.5 306.5L261.5 299.5M261.5 299.5L257.5 293.5M257.5 293.5L252.5 291.5M252.5 315.5L259.5 312.5M259.5 312.5L263.5 306.5M263.5 306.5L263.5 299.5M263.5 299.5L259.5 293.5M259.5 293.5L252.5 291.5M252.5 315.5L250.5 312.5M250.5 312.5L248.5 306.5M248.5 306.5L248.5 299.5M248.5 299.5L250.5 293.5M250.5 293.5L252.5 291.5M252.5 315.5L246.5 312.5M246.5 312.5L243.5 306.5M243.5 306.5L243.5 299.5M243.5 299.5L246.5 293.5M246.5 293.5L252.5 291.5M252.5 315.5L245.5 312.5M245.5 312.5L241.5 306.5M241.5 306.5L241.5 299.5M241.5 299.5L245.5 293.5M245.5 293.5L252.5 291.5" stroke="#f8f878" stroke-width="1.1" fill="none"/>
</svg>
<svg style="left:429px;top:99px" width="425" height="311" viewBox="429 99 425 311" font-family="Liberation Sans" shape-rendering="auto" ><rect x="429" y="99" width="425" height="311" fill="#000"/>
<path d="M478.5 99V410" stroke="#4a4a4a"/>
<path d="M563.5 99V410" stroke="#4a4a4a"/>
<path d="M733.5 99V410" stroke="#4a4a4a"/>
<path d="M818.5 99V410" stroke="#4a4a4a"/>
<path d="M429 161.5H854" stroke="#4a4a4a"/>
<path d="M429 331.5H854" stroke="#4a4a4a"/>
<path d="M429 416.5H854" stroke="#4a4a4a"/>
<path d="M429 246.5H854" stroke="#a098bc"/>
<path d="M648.5 99V410" stroke="#4a4a4a"/>
<path d="M648.50 186.00L648.50 246.00" stroke="#2828a0" stroke-width="1.2" />
<text x="430.5" y="111" font-size="12" fill="#f4f4f4" text-anchor="start" textLength="21.6" lengthAdjust="spacingAndGlyphs">SIDE</text>
<text x="431" y="157.10000000000002" font-size="12" fill="#bcbcbc" text-anchor="start">20</text>
<text x="431" y="241.9" font-size="12" fill="#bcbcbc" text-anchor="start">0</text>
<text x="431" y="326.7" font-size="12" fill="#bcbcbc" text-anchor="start">-20</text>
<text x="431" y="411.5" font-size="12" fill="#bcbcbc" text-anchor="start">-40</text>
<text x="480.40000000000003" y="405" font-size="12" fill="#bcbcbc" text-anchor="start">40</text>
<text x="565.3000000000001" y="405" font-size="12" fill="#bcbcbc" text-anchor="start">20</text>
<text x="735.1" y="405" font-size="12" fill="#bcbcbc" text-anchor="start">-20</text>
<text x="820.0" y="405" font-size="12" fill="#bcbcbc" text-anchor="start">-40</text>
<text x="650.2" y="405" font-size="12" fill="#bcbcbc" text-anchor="start">0</text>
<text x="635" y="110.8" font-size="12" fill="#f4f4f4" text-anchor="start" textLength="13" lengthAdjust="spacingAndGlyphs">+Z</text>
<text x="635" y="405" font-size="12" fill="#f4f4f4" text-anchor="start" textLength="13" lengthAdjust="spacingAndGlyphs">-Z</text>
<text x="431" y="259.5" font-size="12" fill="#f4f4f4" text-anchor="start" textLength="13" lengthAdjust="spacingAndGlyphs">+Y</text>
<text x="840" y="259.5" font-size="12" fill="#f4f4f4" text-anchor="start" textLength="13" lengthAdjust="spacingAndGlyphs">-Y</text>
<path d="M522.50 165.00L522.50 359.00" stroke="#68683e" stroke-width="1" />
<path d="M522.50 165.00L690.00 254.00" stroke="#68683e" stroke-width="1" />
<path d="M522.50 359.00L690.00 254.00" stroke="#68683e" stroke-width="1" />
<path d="M522.50 263.50L691.00 263.50" stroke="#68683e" stroke-width="1" />
<path d="M686.00 268.50L698.00 268.50" stroke="#68683e" stroke-width="1" />
<path d="M697.50 257.50L697.50 270.00" stroke="#68683e" stroke-width="1" />
<path d="M558.5 305.5L568.5 305.5M568.5 305.5L586.5 305.5M586.5 305.5L603.5 305.5M603.5 305.5L613.5 305.5M613.5 305.5L613.5 305.5M558.5 305.5L558.5 305.5M541.5 280.5L558.5 280.5M558.5 280.5L586.5 280.5M586.5 280.5L613.5 280.5M613.5 280.5L631.5 280.5M631.5 280.5L631.5 280.5M541.5 280.5L541.5 280.5M541.5 249.5L558.5 249.5M558.5 249.5L586.5 249.5M586.5 249.5L613.5 249.5M613.5 249.5L631.5 249.5M631.5 249.5L631.5 249.5M541.5 249.5L541.5 249.5M558.5 225.5L568.5 225.5M568.5 225.5L586.5 225.5M586.5 225.5L603.5 225.5M603.5 225.5L613.5 225.5M613.5 225.5L613.5 225.5M558.5 225.5L558.5 225.5M586.5 314.5L558.5 305.5M558.5 305.5L541.5 280.5M541.5 280.5L541.5 249.5M541.5 249.5L558.5 225.5M558.5 225.5L586.5 215.5M586.5 314.5L568.5 305.5M568.5 305.5L558.5 280.5M558.5 280.5L558.5 249.5M558.5 249.5L568.5 225.5M568.5 225.5L586.5 215.5M586.5 314.5L586.5 305.5M586.5 305.5L586.5 280.5M586.5 280.5L586.5 249.5M586.5 249.5L586.5 225.5M586.5 225.5L586.5 215.5M586.5 314.5L603.5 305.5M603.5 305.5L613.5 280.5M613.5 280.5L613.5 249.5M613.5 249.5L603.5 225.5M603.5 225.5L586.5 215.5M586.5 314.5L613.5 305.5M613.5 305.5L631.5 280.5M631.5 280.5L631.5 249.5M631.5 249.5L613.5 225.5M613.5 225.5L586.5 215.5M626.5 304.5L636.5 304.5M636.5 304.5L654.5 304.5M654.5 304.5L671.5 304.5M671.5 304.5L681.5 304.5M681.5 304.5L681.5 304.5M626.5 304.5L626.5 304.5M609.5 279.5L626.5 279.5M626.5 279.5L654.5 279.5M654.5 279.5L681.5 279.5M681.5 279.5L698.5 279.5M698.5 279.5L698.5 279.5M609.5 279.5L609.5 279.5M609.5 248.5L626.5 248.5M626.5 248.5L654.5 248.5M654.5 248.5L681.5 248.5M681.5 248.5L698.5 248.5M698.5 248.5L698.5 248.5M609.5 248.5L609.5 248.5M626.5 223.5L636.5 223.5M636.5 223.5L654.5 223.5M654.5 223.5L671.5 223.5M671.5 223.5L681.5 223.5M681.5 223.5L681.5 223.5M626.5 223.5L626.5 223.5M654.5 313.5L626.5 304.5M626.5 304.5L609.5 279.5M609.5 279.5L609.5 248.5M609.5 248.5L626.5 223.5M626.5 223.5L654.5 214.5M654.5 313.5L636.5 304.5M636.5 304.5L626.5 279.5M626.5 279.5L626.5 248.5M626.5 248.5L636.5 223.5M636.5 223.5L654.5 214.5M654.5 313.5L654.5 304.5M654.5 304.5L654.5 279.5M654.5 279.5L654.5 248.5M654.5 248.5L654.5 223.5M654.5 223.5L654.5 214.5M654.5 313.5L671.5 304.5M671.5 304.5L681.5 279.5M681.5 279.5L681.5 248.5M681.5 248.5L671.5 223.5M671.5 223.5L654.5 214.5M654.5 313.5L681.5 304.5M681.5 304.5L698.5 279.5M698.5 279.5L698.5 248.5M698.5 248.5L681.5 223.5M681.5 223.5L654.5 214.5" stroke="#b4b4b4" stroke-width="1" fill="none"/>
<path d="M588.50 246.50L646.00 246.50" stroke="#40e040" stroke-width="1.2" />
<path d="M646.00 246.50L656.00 246.50" stroke="#e03030" stroke-width="1.2" />
<path d="M684.8 253.6L695.8 253.6M686.4 249.7L694.2 257.5M690.3 248.1L690.3 259.1M694.2 249.7L686.4 257.5" stroke="#e0e0e0" stroke-width="1"/>
<circle cx="681.5" cy="247.5" r="4.3" stroke="#f8f878" stroke-width="1.2" fill="none"/><path d="M677.5 247.5H685.5M681.5 243.5V251.5M678.5 245.5H684.5M678.5 249.5H684.5" stroke="#f8f878" stroke-width="1"/>
<circle cx="681.5" cy="258.5" r="4.3" stroke="#f8f878" stroke-width="1.2" fill="none"/><path d="M677.5 258.5H685.5M681.5 254.5V262.5M678.5 256.5H684.5M678.5 260.5H684.5" stroke="#f8f878" stroke-width="1"/>
<circle cx="681.5" cy="269.5" r="4.3" stroke="#f8f878" stroke-width="1.2" fill="none"/><path d="M677.5 269.5H685.5M681.5 265.5V273.5M678.5 267.5H684.5M678.5 271.5H684.5" stroke="#f8f878" stroke-width="1"/>
<circle cx="681.5" cy="280.5" r="4.3" stroke="#f8f878" stroke-width="1.2" fill="none"/><path d="M677.5 280.5H685.5M681.5 276.5V284.5M678.5 278.5H684.5M678.5 282.5H684.5" stroke="#f8f878" stroke-width="1"/>
</svg>
<svg style="left:2px;top:411px" width="426" height="309" viewBox="2 411 426 309" font-family="Liberation Sans" shape-rendering="auto" ><rect x="2" y="411" width="426" height="309" fill="#000"/>
<path d="M10.5 411V720" stroke="#4a4a4a"/>
<path d="M78.5 411V720" stroke="#4a4a4a"/>
<path d="M146.5 411V720" stroke="#4a4a4a"/>
<path d="M282.5 411V720" stroke="#4a4a4a"/>
<path d="M350.5 411V720" stroke="#4a4a4a"/>
<path d="M418.5 411V720" stroke="#4a4a4a"/>
<path d="M1 494.5H428" stroke="#4a4a4a"/>
<path d="M1 562.5H428" stroke="#4a4a4a"/>
<path d="M1 698.5H428" stroke="#4a4a4a"/>
<path d="M1 427.5H428" stroke="#64648c"/>
<path d="M1 429.5H428" stroke="#68683e"/>
<path d="M1 630.5H428" stroke="#a098bc"/>
<path d="M214.5 411V720" stroke="#7a7a5c"/>
<text x="3.5" y="422.4" font-size="12" fill="#f4f4f4" text-anchor="start" textLength="19.5" lengthAdjust="spacingAndGlyphs">TOP</text>
<text x="3" y="489.8" font-size="12" fill="#bcbcbc" text-anchor="start">20</text>
<text x="3" y="557.9" font-size="12" fill="#bcbcbc" text-anchor="start">10</text>
<text x="3" y="626.0" font-size="12" fill="#bcbcbc" text-anchor="start">0</text>
<text x="3" y="694.1" font-size="12" fill="#bcbcbc" text-anchor="start">-10</text>
<text x="11.700000000000017" y="715.6" font-size="12" fill="#bcbcbc" text-anchor="start">-30</text>
<text x="79.80000000000001" y="715.6" font-size="12" fill="#bcbcbc" text-anchor="start">-20</text>
<text x="147.9" y="715.6" font-size="12" fill="#bcbcbc" text-anchor="start">-10</text>
<text x="284.1" y="715.6" font-size="12" fill="#bcbcbc" text-anchor="start">10</text>
<text x="352.2" y="715.6" font-size="12" fill="#bcbcbc" text-anchor="start">20</text>
<text x="420.29999999999995" y="715.6" font-size="12" fill="#bcbcbc" text-anchor="start">30</text>
<text x="208" y="422" font-size="12" fill="#f4f4f4" text-anchor="start" textLength="13" lengthAdjust="spacingAndGlyphs">+Y</text>
<text x="208" y="716" font-size="12" fill="#f4f4f4" text-anchor="start" textLength="13" lengthAdjust="spacingAndGlyphs">-Y</text>
<text x="3" y="570.5" font-size="12" fill="#f4f4f4" text-anchor="start" textLength="13" lengthAdjust="spacingAndGlyphs">-X</text>
<text x="413" y="570.5" font-size="12" fill="#f4f4f4" text-anchor="start" textLength="13" lengthAdjust="spacingAndGlyphs">+X</text>
<path d="M2.50 446.75L215.60 701.80" stroke="#68683e" stroke-width="1" />
<path d="M427.50 445.50L215.60 701.80" stroke="#68683e" stroke-width="1" />
<path d="M228.5 486.5L252.5 503.5M252.5 503.5L261.5 531.5M261.5 531.5L252.5 558.5M252.5 558.5L228.5 575.5M228.5 575.5L200.5 575.5M200.5 575.5L176.5 558.5M176.5 558.5L167.5 531.5M167.5 531.5L176.5 503.5M176.5 503.5L200.5 486.5M200.5 486.5L228.5 486.5M237.5 459.5L275.5 486.5M275.5 486.5L290.5 531.5M290.5 531.5L275.5 575.5M275.5 575.5L237.5 603.5M237.5 603.5L191.5 603.5M191.5 603.5L153.5 575.5M153.5 575.5L138.5 531.5M138.5 531.5L153.5 486.5M153.5 486.5L191.5 459.5M191.5 459.5L237.5 459.5M214.5 531.5L228.5 486.5M228.5 486.5L237.5 459.5M237.5 459.5L237.5 459.5M214.5 531.5L252.5 503.5M252.5 503.5L275.5 486.5M275.5 486.5L275.5 486.5M214.5 531.5L261.5 531.5M261.5 531.5L290.5 531.5M290.5 531.5L290.5 531.5M214.5 531.5L252.5 558.5M252.5 558.5L275.5 575.5M275.5 575.5L275.5 575.5M214.5 531.5L228.5 575.5M228.5 575.5L237.5 603.5M237.5 603.5L237.5 603.5M214.5 531.5L200.5 575.5M200.5 575.5L191.5 603.5M191.5 603.5L191.5 603.5M214.5 531.5L176.5 558.5M176.5 558.5L153.5 575.5M153.5 575.5L153.5 575.5M214.5 531.5L167.5 531.5M167.5 531.5L138.5 531.5M138.5 531.5L138.5 531.5M214.5 531.5L176.5 503.5M176.5 503.5L153.5 486.5M153.5 486.5L153.5 486.5M214.5 531.5L200.5 486.5M200.5 486.5L191.5 459.5M191.5 459.5L191.5 459.5M228.5 594.5L252.5 611.5M252.5 611.5L261.5 639.5M261.5 639.5L252.5 666.5M252.5 666.5L228.5 683.5M228.5 683.5L200.5 683.5M200.5 683.5L176.5 666.5M176.5 666.5L167.5 639.5M167.5 639.5L176.5 611.5M176.5 611.5L200.5 594.5M200.5 594.5L228.5 594.5M237.5 566.5L275.5 594.5M275.5 594.5L290.5 639.5M290.5 639.5L275.5 683.5M275.5 683.5L237.5 711.5M237.5 711.5L191.5 711.5M191.5 711.5L153.5 683.5M153.5 683.5L138.5 639.5M138.5 639.5L153.5 594.5M153.5 594.5L191.5 566.5M191.5 566.5L237.5 566.5M214.5 639.5L228.5 594.5M228.5 594.5L237.5 566.5M237.5 566.5L237.5 566.5M214.5 639.5L252.5 611.5M252.5 611.5L275.5 594.5M275.5 594.5L275.5 594.5M214.5 639.5L261.5 639.5M261.5 639.5L290.5 639.5M290.5 639.5L290.5 639.5M214.5 639.5L252.5 666.5M252.5 666.5L275.5 683.5M275.5 683.5L275.5 683.5M214.5 639.5L228.5 683.5M228.5 683.5L237.5 711.5M237.5 711.5L237.5 711.5M214.5 639.5L200.5 683.5M200.5 683.5L191.5 711.5M191.5 711.5L191.5 711.5M214.5 639.5L176.5 666.5M176.5 666.5L153.5 683.5M153.5 683.5L153.5 683.5M214.5 639.5L167.5 639.5M167.5 639.5L138.5 639.5M138.5 639.5L138.5 639.5M214.5 639.5L176.5 611.5M176.5 611.5L153.5 594.5M153.5 594.5L153.5 594.5M214.5 639.5L200.5 594.5M200.5 594.5L191.5 566.5M191.5 566.5L191.5 566.5" stroke="#b4b4b4" stroke-width="1" fill="none"/>
<path d="M214.50 630.50L214.50 529.00" stroke="#40c040" stroke-width="1" />
<path d="M214.50 630.50L224.00 630.50" stroke="#3030e0" stroke-width="1.2" />
<path d="M224.00 630.50L289.00 630.50" stroke="#e03040" stroke-width="1.2" />
<path d="M289 623.5l14 14M303 623.5l-14 14" stroke="#d02020" stroke-width="1.2"/>
<path d="M217.9 697.2L230.9 697.2M219.8 692.6L229.0 701.8M224.4 690.7L224.4 703.7M229.0 692.6L219.8 701.8" stroke="#e0e0e0" stroke-width="1"/>
<path d="M207.5 693v15.5h14" stroke="#8a7a30" fill="none"/>
<path d="M193.5 679.5L195.5 680.5M195.5 680.5L196.5 682.5M196.5 682.5L195.5 685.5M195.5 685.5L193.5 686.5M193.5 686.5L191.5 686.5M191.5 686.5L189.5 685.5M189.5 685.5L188.5 682.5M188.5 682.5L189.5 680.5M189.5 680.5L191.5 679.5M191.5 679.5L193.5 679.5M194.5 676.5L197.5 679.5M197.5 679.5L199.5 682.5M199.5 682.5L197.5 686.5M197.5 686.5L194.5 688.5M194.5 688.5L190.5 688.5M190.5 688.5L187.5 686.5M187.5 686.5L186.5 682.5M186.5 682.5L187.5 679.5M187.5 679.5L190.5 676.5M190.5 676.5L194.5 676.5M192.5 682.5L193.5 679.5M193.5 679.5L194.5 676.5M194.5 676.5L194.5 676.5M192.5 682.5L195.5 680.5M195.5 680.5L197.5 679.5M197.5 679.5L197.5 679.5M192.5 682.5L196.5 682.5M196.5 682.5L199.5 682.5M199.5 682.5L199.5 682.5M192.5 682.5L195.5 685.5M195.5 685.5L197.5 686.5M197.5 686.5L197.5 686.5M192.5 682.5L193.5 686.5M193.5 686.5L194.5 688.5M194.5 688.5L194.5 688.5M192.5 682.5L191.5 686.5M191.5 686.5L190.5 688.5M190.5 688.5L190.5 688.5M192.5 682.5L189.5 685.5M189.5 685.5L187.5 686.5M187.5 686.5L187.5 686.5M192.5 682.5L188.5 682.5M188.5 682.5L186.5 682.5M186.5 682.5L186.5 682.5M192.5 682.5L189.5 680.5M189.5 680.5L187.5 679.5M187.5 679.5L187.5 679.5M192.5 682.5L191.5 679.5M191.5 679.5L190.5 676.5M190.5 676.5L190.5 676.5M208.5 679.5L210.5 680.5M210.5 680.5L211.5 682.5M211.5 682.5L210.5 685.5M210.5 685.5L208.5 686.5M208.5 686.5L206.5 686.5M206.5 686.5L204.5 685.5M204.5 685.5L203.5 682.5M203.5 682.5L204.5 680.5M204.5 680.5L206.5 679.5M206.5 679.5L208.5 679.5M209.5 676.5L212.5 679.5M212.5 679.5L213.5 682.5M213.5 682.5L212.5 686.5M212.5 686.5L209.5 688.5M209.5 688.5L205.5 688.5M205.5 688.5L202.5 686.5M202.5 686.5L200.5 682.5M200.5 682.5L202.5 679.5M202.5 679.5L205.5 676.5M205.5 676.5L209.5 676.5M207.5 682.5L208.5 679.5M208.5 679.5L209.5 676.5M209.5 676.5L209.5 676.5M207.5 682.5L210.5 680.5M210.5 680.5L212.5 679.5M212.5 679.5L212.5 679.5M207.5 682.5L211.5 682.5M211.5 682.5L213.5 682.5M213.5 682.5L213.5 682.5M207.5 682.5L210.5 685.5M210.5 685.5L212.5 686.5M212.5 686.5L212.5 686.5M207.5 682.5L208.5 686.5M208.5 686.5L209.5 688.5M209.5 688.5L209.5 688.5M207.5 682.5L206.5 686.5M206.5 686.5L205.5 688.5M205.5 688.5L205.5 688.5M207.5 682.5L204.5 685.5M204.5 685.5L202.5 686.5M202.5 686.5L202.5 686.5M207.5 682.5L203.5 682.5M203.5 682.5L200.5 682.5M200.5 682.5L200.5 682.5M207.5 682.5L204.5 680.5M204.5 680.5L202.5 679.5M202.5 679.5L202.5 679.5M207.5 682.5L206.5 679.5M206.5 679.5L205.5 676.5M205.5 676.5L205.5 676.5M222.5 679.5L224.5 680.5M224.5 680.5L225.5 682.5M225.5 682.5L224.5 685.5M224.5 685.5L222.5 686.5M222.5 686.5L220.5 686.5M220.5 686.5L218.5 685.5M218.5 685.5L217.5 682.5M217.5 682.5L218.5 680.5M218.5 680.5L220.5 679.5M220.5 679.5L222.5 679.5M223.5 676.5L226.5 679.5M226.5 679.5L228.5 682.5M228.5 682.5L226.5 686.5M226.5 686.5L223.5 688.5M223.5 688.5L219.5 688.5M219.5 688.5L216.5 686.5M216.5 686.5L215.5 682.5M215.5 682.5L216.5 679.5M216.5 679.5L219.5 676.5M219.5 676.5L223.5 676.5M221.5 682.5L222.5 679.5M222.5 679.5L223.5 676.5M223.5 676.5L223.5 676.5M221.5 682.5L224.5 680.5M224.5 680.5L226.5 679.5M226.5 679.5L226.5 679.5M221.5 682.5L225.5 682.5M225.5 682.5L228.5 682.5M228.5 682.5L228.5 682.5M221.5 682.5L224.5 685.5M224.5 685.5L226.5 686.5M226.5 686.5L226.5 686.5M221.5 682.5L222.5 686.5M222.5 686.5L223.5 688.5M223.5 688.5L223.5 688.5M221.5 682.5L220.5 686.5M220.5 686.5L219.5 688.5M219.5 688.5L219.5 688.5M221.5 682.5L218.5 685.5M218.5 685.5L216.5 686.5M216.5 686.5L216.5 686.5M221.5 682.5L217.5 682.5M217.5 682.5L215.5 682.5M215.5 682.5L215.5 682.5M221.5 682.5L218.5 680.5M218.5 680.5L216.5 679.5M216.5 679.5L216.5 679.5M221.5 682.5L220.5 679.5M220.5 679.5L219.5 676.5M219.5 676.5L219.5 676.5M237.5 679.5L239.5 680.5M239.5 680.5L240.5 682.5M240.5 682.5L239.5 685.5M239.5 685.5L237.5 686.5M237.5 686.5L235.5 686.5M235.5 686.5L233.5 685.5M233.5 685.5L232.5 682.5M232.5 682.5L233.5 680.5M233.5 680.5L235.5 679.5M235.5 679.5L237.5 679.5M238.5 676.5L241.5 679.5M241.5 679.5L242.5 682.5M242.5 682.5L241.5 686.5M241.5 686.5L238.5 688.5M238.5 688.5L234.5 688.5M234.5 688.5L231.5 686.5M231.5 686.5L229.5 682.5M229.5 682.5L231.5 679.5M231.5 679.5L234.5 676.5M234.5 676.5L238.5 676.5M236.5 682.5L237.5 679.5M237.5 679.5L238.5 676.5M238.5 676.5L238.5 676.5M236.5 682.5L239.5 680.5M239.5 680.5L241.5 679.5M241.5 679.5L241.5 679.5M236.5 682.5L240.5 682.5M240.5 682.5L242.5 682.5M242.5 682.5L242.5 682.5M236.5 682.5L239.5 685.5M239.5 685.5L241.5 686.5M241.5 686.5L241.5 686.5M236.5 682.5L237.5 686.5M237.5 686.5L238.5 688.5M238.5 688.5L238.5 688.5M236.5 682.5L235.5 686.5M235.5 686.5L234.5 688.5M234.5 688.5L234.5 688.5M236.5 682.5L233.5 685.5M233.5 685.5L231.5 686.5M231.5 686.5L231.5 686.5M236.5 682.5L232.5 682.5M232.5 682.5L229.5 682.5M229.5 682.5L229.5 682.5M236.5 682.5L233.5 680.5M233.5 680.5L231.5 679.5M231.5 679.5L231.5 679.5M236.5 682.5L235.5 679.5M235.5 679.5L234.5 676.5M234.5 676.5L234.5 676.5M193.5 679.5L195.5 680.5M195.5 680.5L196.5 682.5M196.5 682.5L195.5 685.5M195.5 685.5L193.5 686.5M193.5 686.5L191.5 686.5M191.5 686.5L189.5 685.5M189.5 685.5L188.5 682.5M188.5 682.5L189.5 680.5M189.5 680.5L191.5 679.5M191.5 679.5L193.5 679.5M194.5 676.5L197.5 679.5M197.5 679.5L199.5 682.5M199.5 682.5L197.5 686.5M197.5 686.5L194.5 688.5M194.5 688.5L190.5 688.5M190.5 688.5L187.5 686.5M187.5 686.5L186.5 682.5M186.5 682.5L187.5 679.5M187.5 679.5L190.5 676.5M190.5 676.5L194.5 676.5M192.5 682.5L193.5 679.5M193.5 679.5L194.5 676.5M194.5 676.5L194.5 676.5M192.5 682.5L195.5 680.5M195.5 680.5L197.5 679.5M197.5 679.5L197.5 679.5M192.5 682.5L196.5 682.5M196.5 682.5L199.5 682.5M199.5 682.5L199.5 682.5M192.5 682.5L195.5 685.5M195.5 685.5L197.5 686.5M197.5 686.5L197.5 686.5M192.5 682.5L193.5 686.5M193.5 686.5L194.5 688.5M194.5 688.5L194.5 688.5M192.5 682.5L191.5 686.5M191.5 686.5L190.5 688.5M190.5 688.5L190.5 688.5M192.5 682.5L189.5 685.5M189.5 685.5L187.5 686.5M187.5 686.5L187.5 686.5M192.5 682.5L188.5 682.5M188.5 682.5L186.5 682.5M186.5 682.5L186.5 682.5M192.5 682.5L189.5 680.5M189.5 680.5L187.5 679.5M187.5 679.5L187.5 679.5M192.5 682.5L191.5 679.5M191.5 679.5L190.5 676.5M190.5 676.5L190.5 676.5M208.5 679.5L210.5 680.5M210.5 680.5L211.5 682.5M211.5 682.5L210.5 685.5M210.5 685.5L208.5 686.5M208.5 686.5L206.5 686.5M206.5 686.5L204.5 685.5M204.5 685.5L203.5 682.5M203.5 682.5L204.5 680.5M204.5 680.5L206.5 679.5M206.5 679.5L208.5 679.5M209.5 676.5L212.5 679.5M212.5 679.5L213.5 682.5M213.5 682.5L212.5 686.5M212.5 686.5L209.5 688.5M209.5 688.5L205.5 688.5M205.5 688.5L202.5 686.5M202.5 686.5L200.5 682.5M200.5 682.5L202.5 679.5M202.5 679.5L205.5 676.5M205.5 676.5L209.5 676.5M207.5 682.5L208.5 679.5M208.5 679.5L209.5 676.5M209.5 676.5L209.5 676.5M207.5 682.5L210.5 680.5M210.5 680.5L212.5 679.5M212.5 679.5L212.5 679.5M207.5 682.5L211.5 682.5M211.5 682.5L213.5 682.5M213.5 682.5L213.5 682.5M207.5 682.5L210.5 685.5M210.5 685.5L212.5 686.5M212.5 686.5L212.5 686.5M207.5 682.5L208.5 686.5M208.5 686.5L209.5 688.5M209.5 688.5L209.5 688.5M207.5 682.5L206.5 686.5M206.5 686.5L205.5 688.5M205.5 688.5L205.5 688.5M207.5 682.5L204.5 685.5M204.5 685.5L202.5 686.5M202.5 686.5L202.5 686.5M207.5 682.5L203.5 682.5M203.5 682.5L200.5 682.5M200.5 682.5L200.5 682.5M207.5 682.5L204.5 680.5M204.5 680.5L202.5 679.5M202.5 679.5L202.5 679.5M207.5 682.5L206.5 679.5M206.5 679.5L205.5 676.5M205.5 676.5L205.5 676.5M222.5 679.5L224.5 680.5M224.5 680.5L225.5 682.5M225.5 682.5L224.5 685.5M224.5 685.5L222.5 686.5M222.5 686.5L220.5 686.5M220.5 686.5L218.5 685.5M218.5 685.5L217.5 682.5M217.5 682.5L218.5 680.5M218.5 680.5L220.5 679.5M220.5 679.5L222.5 679.5M223.5 676.5L226.5 679.5M226.5 679.5L228.5 682.5M228.5 682.5L226.5 686.5M226.5 686.5L223.5 688.5M223.5 688.5L219.5 688.5M219.5 688.5L216.5 686.5M216.5 686.5L215.5 682.5M215.5 682.5L216.5 679.5M216.5 679.5L219.5 676.5M219.5 676.5L223.5 676.5M221.5 682.5L222.5 679.5M222.5 679.5L223.5 676.5M223.5 676.5L223.5 676.5M221.5 682.5L224.5 680.5M224.5 680.5L226.5 679.5M226.5 679.5L226.5 679.5M221.5 682.5L225.5 682.5M225.5 682.5L228.5 682.5M228.5 682.5L228.5 682.5M221.5 682.5L224.5 685.5M224.5 685.5L226.5 686.5M226.5 686.5L226.5 686.5M221.5 682.5L222.5 686.5M222.5 686.5L223.5 688.5M223.5 688.5L223.5 688.5M221.5 682.5L220.5 686.5M220.5 686.5L219.5 688.5M219.5 688.5L219.5 688.5M221.5 682.5L218.5 685.5M218.5 685.5L216.5 686.5M216.5 686.5L216.5 686.5M221.5 682.5L217.5 682.5M217.5 682.5L215.5 682.5M215.5 682.5L215.5 682.5M221.5 682.5L218.5 680.5M218.5 680.5L216.5 679.5M216.5 679.5L216.5 679.5M221.5 682.5L220.5 679.5M220.5 679.5L219.5 676.5M219.5 676.5L219.5 676.5M237.5 679.5L239.5 680.5M239.5 680.5L240.5 682.5M240.5 682.5L239.5 685.5M239.5 685.5L237.5 686.5M237.5 686.5L235.5 686.5M235.5 686.5L233.5 685.5M233.5 685.5L232.5 682.5M232.5 682.5L233.5 680.5M233.5 680.5L235.5 679.5M235.5 679.5L237.5 679.5M238.5 676.5L241.5 679.5M241.5 679.5L242.5 682.5M242.5 682.5L241.5 686.5M241.5 686.5L238.5 688.5M238.5 688.5L234.5 688.5M234.5 688.5L231.5 686.5M231.5 686.5L229.5 682.5M229.5 682.5L231.5 679.5M231.5 679.5L234.5 676.5M234.5 676.5L238.5 676.5M236.5 682.5L237.5 679.5M237.5 679.5L238.5 676.5M238.5 676.5L238.5 676.5M236.5 682.5L239.5 680.5M239.5 680.5L241.5 679.5M241.5 679.5L241.5 679.5M236.5 682.5L240.5 682.5M240.5 682.5L242.5 682.5M242.5 682.5L242.5 682.5M236.5 682.5L239.5 685.5M239.5 685.5L241.5 686.5M241.5 686.5L241.5 686.5M236.5 682.5L237.5 686.5M237.5 686.5L238.5 688.5M238.5 688.5L238.5 688.5M236.5 682.5L235.5 686.5M235.5 686.5L234.5 688.5M234.5 688.5L234.5 688.5M236.5 682.5L233.5 685.5M233.5 685.5L231.5 686.5M231.5 686.5L231.5 686.5M236.5 682.5L232.5 682.5M232.5 682.5L229.5 682.5M229.5 682.5L229.5 682.5M236.5 682.5L233.5 680.5M233.5 680.5L231.5 679.5M231.5 679.5L231.5 679.5M236.5 682.5L235.5 679.5M235.5 679.5L234.5 676.5M234.5 676.5L234.5 676.5M193.5 679.5L195.5 680.5M195.5 680.5L196.5 682.5M196.5 682.5L195.5 685.5M195.5 685.5L193.5 686.5M193.5 686.5L191.5 686.5M191.5 686.5L189.5 685.5M189.5 685.5L188.5 682.5M188.5 682.5L189.5 680.5M189.5 680.5L191.5 679.5M191.5 679.5L193.5 679.5M194.5 676.5L197.5 679.5M197.5 679.5L199.5 682.5M199.5 682.5L197.5 686.5M197.5 686.5L194.5 688.5M194.5 688.5L190.5 688.5M190.5 688.5L187.5 686.5M187.5 686.5L186.5 682.5M186.5 682.5L187.5 679.5M187.5 679.5L190.5 676.5M190.5 676.5L194.5 676.5M192.5 682.5L193.5 679.5M193.5 679.5L194.5 676.5M194.5 676.5L194.5 676.5M192.5 682.5L195.5 680.5M195.5 680.5L197.5 679.5M197.5 679.5L197.5 679.5M192.5 682.5L196.5 682.5M196.5 682.5L199.5 682.5M199.5 682.5L199.5 682.5M192.5 682.5L195.5 685.5M195.5 685.5L197.5 686.5M197.5 686.5L197.5 686.5M192.5 682.5L193.5 686.5M193.5 686.5L194.5 688.5M194.5 688.5L194.5 688.5M192.5 682.5L191.5 686.5M191.5 686.5L190.5 688.5M190.5 688.5L190.5 688.5M192.5 682.5L189.5 685.5M189.5 685.5L187.5 686.5M187.5 686.5L187.5 686.5M192.5 682.5L188.5 682.5M188.5 682.5L186.5 682.5M186.5 682.5L186.5 682.5M192.5 682.5L189.5 680.5M189.5 680.5L187.5 679.5M187.5 679.5L187.5 679.5M192.5 682.5L191.5 679.5M191.5 679.5L190.5 676.5M190.5 676.5L190.5 676.5M208.5 679.5L210.5 680.5M210.5 680.5L211.5 682.5M211.5 682.5L210.5 685.5M210.5 685.5L208.5 686.5M208.5 686.5L206.5 686.5M206.5 686.5L204.5 685.5M204.5 685.5L203.5 682.5M203.5 682.5L204.5 680.5M204.5 680.5L206.5 679.5M206.5 679.5L208.5 679.5M209.5 676.5L212.5 679.5M212.5 679.5L213.5 682.5M213.5 682.5L212.5 686.5M212.5 686.5L209.5 688.5M209.5 688.5L205.5 688.5M205.5 688.5L202.5 686.5M202.5 686.5L200.5 682.5M200.5 682.5L202.5 679.5M202.5 679.5L205.5 676.5M205.5 676.5L209.5 676.5M207.5 682.5L208.5 679.5M208.5 679.5L209.5 676.5M209.5 676.5L209.5 676.5M207.5 682.5L210.5 680.5M210.5 680.5L212.5 679.5M212.5 679.5L212.5 679.5M207.5 682.5L211.5 682.5M211.5 682.5L213.5 682.5M213.5 682.5L213.5 682.5M207.5 682.5L210.5 685.5M210.5 685.5L212.5 686.5M212.5 686.5L212.5 686.5M207.5 682.5L208.5 686.5M208.5 686.5L209.5 688.5M209.5 688.5L209.5 688.5M207.5 682.5L206.5 686.5M206.5 686.5L205.5 688.5M205.5 688.5L205.5 688.5M207.5 682.5L204.5 685.5M204.5 685.5L202.5 686.5M202.5 686.5L202.5 686.5M207.5 682.5L203.5 682.5M203.5 682.5L200.5 682.5M200.5 682.5L200.5 682.5M207.5 682.5L204.5 680.5M204.5 680.5L202.5 679.5M202.5 679.5L202.5 679.5M207.5 682.5L206.5 679.5M206.5 679.5L205.5 676.5M205.5 676.5L205.5 676.5M222.5 679.5L224.5 680.5M224.5 680.5L225.5 682.5M225.5 682.5L224.5 685.5M224.5 685.5L222.5 686.5M222.5 686.5L220.5 686.5M220.5 686.5L218.5 685.5M218.5 685.5L217.5 682.5M217.5 682.5L218.5 680.5M218.5 680.5L220.5 679.5M220.5 679.5L222.5 679.5M223.5 676.5L226.5 679.5M226.5 679.5L228.5 682.5M228.5 682.5L226.5 686.5M226.5 686.5L223.5 688.5M223.5 688.5L219.5 688.5M219.5 688.5L216.5 686.5M216.5 686.5L215.5 682.5M215.5 682.5L216.5 679.5M216.5 679.5L219.5 676.5M219.5 676.5L223.5 676.5M221.5 682.5L222.5 679.5M222.5 679.5L223.5 676.5M223.5 676.5L223.5 676.5M221.5 682.5L224.5 680.5M224.5 680.5L226.5 679.5M226.5 679.5L226.5 679.5M221.5 682.5L225.5 682.5M225.5 682.5L228.5 682.5M228.5 682.5L228.5 682.5M221.5 682.5L224.5 685.5M224.5 685.5L226.5 686.5M226.5 686.5L226.5 686.5M221.5 682.5L222.5 686.5M222.5 686.5L223.5 688.5M223.5 688.5L223.5 688.5M221.5 682.5L220.5 686.5M220.5 686.5L219.5 688.5M219.5 688.5L219.5 688.5M221.5 682.5L218.5 685.5M218.5 685.5L216.5 686.5M216.5 686.5L216.5 686.5M221.5 682.5L217.5 682.5M217.5 682.5L215.5 682.5M215.5 682.5L215.5 682.5M221.5 682.5L218.5 680.5M218.5 680.5L216.5 679.5M216.5 679.5L216.5 679.5M221.5 682.5L220.5 679.5M220.5 679.5L219.5 676.5M219.5 676.5L219.5 676.5M237.5 679.5L239.5 680.5M239.5 680.5L240.5 682.5M240.5 682.5L239.5 685.5M239.5 685.5L237.5 686.5M237.5 686.5L235.5 686.5M235.5 686.5L233.5 685.5M233.5 685.5L232.5 682.5M232.5 682.5L233.5 680.5M233.5 680.5L235.5 679.5M235.5 679.5L237.5 679.5M238.5 676.5L241.5 679.5M241.5 679.5L242.5 682.5M242.5 682.5L241.5 686.5M241.5 686.5L238.5 688.5M238.5 688.5L234.5 688.5M234.5 688.5L231.5 686.5M231.5 686.5L229.5 682.5M229.5 682.5L231.5 679.5M231.5 679.5L234.5 676.5M234.5 676.5L238.5 676.5M236.5 682.5L237.5 679.5M237.5 679.5L238.5 676.5M238.5 676.5L238.5 676.5M236.5 682.5L239.5 680.5M239.5 680.5L241.5 679.5M241.5 679.5L241.5 679.5M236.5 682.5L240.5 682.5M240.5 682.5L242.5 682.5M242.5 682.5L242.5 682.5M236.5 682.5L239.5 685.5M239.5 685.5L241.5 686.5M241.5 686.5L241.5 686.5M236.5 682.5L237.5 686.5M237.5 686.5L238.5 688.5M238.5 688.5L238.5 688.5M236.5 682.5L235.5 686.5M235.5 686.5L234.5 688.5M234.5 688.5L234.5 688.5M236.5 682.5L233.5 685.5M233.5 685.5L231.5 686.5M231.5 686.5L231.5 686.5M236.5 682.5L232.5 682.5M232.5 682.5L229.5 682.5M229.5 682.5L229.5 682.5M236.5 682.5L233.5 680.5M233.5 680.5L231.5 679.5M231.5 679.5L231.5 679.5M236.5 682.5L235.5 679.5M235.5 679.5L234.5 676.5M234.5 676.5L234.5 676.5M193.5 679.5L195.5 680.5M195.5 680.5L196.5 682.5M196.5 682.5L195.5 685.5M195.5 685.5L193.5 686.5M193.5 686.5L191.5 686.5M191.5 686.5L189.5 685.5M189.5 685.5L188.5 682.5M188.5 682.5L189.5 680.5M189.5 680.5L191.5 679.5M191.5 679.5L193.5 679.5M194.5 676.5L197.5 679.5M197.5 679.5L199.5 682.5M199.5 682.5L197.5 686.5M197.5 686.5L194.5 688.5M194.5 688.5L190.5 688.5M190.5 688.5L187.5 686.5M187.5 686.5L186.5 682.5M186.5 682.5L187.5 679.5M187.5 679.5L190.5 676.5M190.5 676.5L194.5 676.5M192.5 682.5L193.5 679.5M193.5 679.5L194.5 676.5M194.5 676.5L194.5 676.5M192.5 682.5L195.5 680.5M195.5 680.5L197.5 679.5M197.5 679.5L197.5 679.5M192.5 682.5L196.5 682.5M196.5 682.5L199.5 682.5M199.5 682.5L199.5 682.5M192.5 682.5L195.5 685.5M195.5 685.5L197.5 686.5M197.5 686.5L197.5 686.5M192.5 682.5L193.5 686.5M193.5 686.5L194.5 688.5M194.5 688.5L194.5 688.5M192.5 682.5L191.5 686.5M191.5 686.5L190.5 688.5M190.5 688.5L190.5 688.5M192.5 682.5L189.5 685.5M189.5 685.5L187.5 686.5M187.5 686.5L187.5 686.5M192.5 682.5L188.5 682.5M188.5 682.5L186.5 682.5M186.5 682.5L186.5 682.5M192.5 682.5L189.5 680.5M189.5 680.5L187.5 679.5M187.5 679.5L187.5 679.5M192.5 682.5L191.5 679.5M191.5 679.5L190.5 676.5M190.5 676.5L190.5 676.5M208.5 679.5L210.5 680.5M210.5 680.5L211.5 682.5M211.5 682.5L210.5 685.5M210.5 685.5L208.5 686.5M208.5 686.5L206.5 686.5M206.5 686.5L204.5 685.5M204.5 685.5L203.5 682.5M203.5 682.5L204.5 680.5M204.5 680.5L206.5 679.5M206.5 679.5L208.5 679.5M209.5 676.5L212.5 679.5M212.5 679.5L213.5 682.5M213.5 682.5L212.5 686.5M212.5 686.5L209.5 688.5M209.5 688.5L205.5 688.5M205.5 688.5L202.5 686.5M202.5 686.5L200.5 682.5M200.5 682.5L202.5 679.5M202.5 679.5L205.5 676.5M205.5 676.5L209.5 676.5M207.5 682.5L208.5 679.5M208.5 679.5L209.5 676.5M209.5 676.5L209.5 676.5M207.5 682.5L210.5 680.5M210.5 680.5L212.5 679.5M212.5 679.5L212.5 679.5M207.5 682.5L211.5 682.5M211.5 682.5L213.5 682.5M213.5 682.5L213.5 682.5M207.5 682.5L210.5 685.5M210.5 685.5L212.5 686.5M212.5 686.5L212.5 686.5M207.5 682.5L208.5 686.5M208.5 686.5L209.5 688.5M209.5 688.5L209.5 688.5M207.5 682.5L206.5 686.5M206.5 686.5L205.5 688.5M205.5 688.5L205.5 688.5M207.5 682.5L204.5 685.5M204.5 685.5L202.5 686.5M202.5 686.5L202.5 686.5M207.5 682.5L203.5 682.5M203.5 682.5L200.5 682.5M200.5 682.5L200.5 682.5M207.5 682.5L204.5 680.5M204.5 680.5L202.5 679.5M202.5 679.5L202.5 679.5M207.5 682.5L206.5 679.5M206.5 679.5L205.5 676.5M205.5 676.5L205.5 676.5M222.5 679.5L224.5 680.5M224.5 680.5L225.5 682.5M225.5 682.5L224.5 685.5M224.5 685.5L222.5 686.5M222.5 686.5L220.5 686.5M220.5 686.5L218.5 685.5M218.5 685.5L217.5 682.5M217.5 682.5L218.5 680.5M218.5 680.5L220.5 679.5M220.5 679.5L222.5 679.5M223.5 676.5L226.5 679.5M226.5 679.5L228.5 682.5M228.5 682.5L226.5 686.5M226.5 686.5L223.5 688.5M223.5 688.5L219.5 688.5M219.5 688.5L216.5 686.5M216.5 686.5L215.5 682.5M215.5 682.5L216.5 679.5M216.5 679.5L219.5 676.5M219.5 676.5L223.5 676.5M221.5 682.5L222.5 679.5M222.5 679.5L223.5 676.5M223.5 676.5L223.5 676.5M221.5 682.5L224.5 680.5M224.5 680.5L226.5 679.5M226.5 679.5L226.5 679.5M221.5 682.5L225.5 682.5M225.5 682.5L228.5 682.5M228.5 682.5L228.5 682.5M221.5 682.5L224.5 685.5M224.5 685.5L226.5 686.5M226.5 686.5L226.5 686.5M221.5 682.5L222.5 686.5M222.5 686.5L223.5 688.5M223.5 688.5L223.5 688.5M221.5 682.5L220.5 686.5M220.5 686.5L219.5 688.5M219.5 688.5L219.5 688.5M221.5 682.5L218.5 685.5M218.5 685.5L216.5 686.5M216.5 686.5L216.5 686.5M221.5 682.5L217.5 682.5M217.5 682.5L215.5 682.5M215.5 682.5L215.5 682.5M221.5 682.5L218.5 680.5M218.5 680.5L216.5 679.5M216.5 679.5L216.5 679.5M221.5 682.5L220.5 679.5M220.5 679.5L219.5 676.5M219.5 676.5L219.5 676.5M237.5 679.5L239.5 680.5M239.5 680.5L240.5 682.5M240.5 682.5L239.5 685.5M239.5 685.5L237.5 686.5M237.5 686.5L235.5 686.5M235.5 686.5L233.5 685.5M233.5 685.5L232.5 682.5M232.5 682.5L233.5 680.5M233.5 680.5L235.5 679.5M235.5 679.5L237.5 679.5M238.5 676.5L241.5 679.5M241.5 679.5L242.5 682.5M242.5 682.5L241.5 686.5M241.5 686.5L238.5 688.5M238.5 688.5L234.5 688.5M234.5 688.5L231.5 686.5M231.5 686.5L229.5 682.5M229.5 682.5L231.5 679.5M231.5 679.5L234.5 676.5M234.5 676.5L238.5 676.5M236.5 682.5L237.5 679.5M237.5 679.5L238.5 676.5M238.5 676.5L238.5 676.5M236.5 682.5L239.5 680.5M239.5 680.5L241.5 679.5M241.5 679.5L241.5 679.5M236.5 682.5L240.5 682.5M240.5 682.5L242.5 682.5M242.5 682.5L242.5 682.5M236.5 682.5L239.5 685.5M239.5 685.5L241.5 686.5M241.5 686.5L241.5 686.5M236.5 682.5L237.5 686.5M237.5 686.5L238.5 688.5M238.5 688.5L238.5 688.5M236.5 682.5L235.5 686.5M235.5 686.5L234.5 688.5M234.5 688.5L234.5 688.5M236.5 682.5L233.5 685.5M233.5 685.5L231.5 686.5M231.5 686.5L231.5 686.5M236.5 682.5L232.5 682.5M232.5 682.5L229.5 682.5M229.5 682.5L229.5 682.5M236.5 682.5L233.5 680.5M233.5 680.5L231.5 679.5M231.5 679.5L231.5 679.5M236.5 682.5L235.5 679.5M235.5 679.5L234.5 676.5M234.5 676.5L234.5 676.5" stroke="#f8f878" stroke-width="1" fill="none"/>
</svg>
<svg style="left:429px;top:411px" width="425" height="309" viewBox="429 411 425 309" font-family="Liberation Sans" shape-rendering="auto" ><rect x="429" y="411" width="425" height="309" fill="#000"/>
<defs><clipPath id="rclip"><rect x="437" y="411" width="407" height="309"/></clipPath><clipPath id="cTL"><circle cx="530" cy="429" r="106"/></clipPath><clipPath id="cTR"><circle cx="755" cy="435" r="104"/></clipPath><clipPath id="cBL"><circle cx="533" cy="712" r="103"/></clipPath><clipPath id="cBR"><circle cx="752" cy="706" r="97"/></clipPath><filter id="swirl" x="-5%" y="-5%" width="110%" height="110%"><feTurbulence type="fractalNoise" baseFrequency="0.07" numOctaves="2" seed="5" result="t"/><feDisplacementMap in="SourceGraphic" in2="t" scale="10" xChannelSelector="R" yChannelSelector="G"/></filter><filter id="noise" x="0" y="0" width="100%" height="100%"><feTurbulence type="fractalNoise" baseFrequency="0.12" numOctaves="3" seed="3"/><feColorMatrix values="0 0 0 0 0  0 0 0 0 0  0 0 0 0 0  0 0 0 -2 1.1"/></filter><filter id="cnoise" x="0" y="0" width="100%" height="100%"><feTurbulence type="fractalNoise" baseFrequency="0.15" numOctaves="2" seed="11"/><feColorMatrix values="2.5 0 0 0 -0.75  0 2.5 0 0 -0.75  0 0 2.5 0 -0.75  0 0 0 0 0.22"/></filter><filter id="streak" x="0" y="0" width="100%" height="100%"><feTurbulence type="fractalNoise" baseFrequency="0.15 0.03" numOctaves="2" seed="7"/><feColorMatrix values="1.3 0 0 0 -0.4  0 1.9 0 0 -0.45  0 0 1.5 0 -0.45  0 0 0 2.5 -1.15"/></filter></defs>
<g clip-path="url(#rclip)"><g filter="url(#swirl)">
<rect x="437" y="411" width="407" height="309" fill="#141410"/>
<rect x="437" y="515" width="407" height="130" filter="url(#streak)" opacity=".7"/>
<circle cx="641" cy="569" r="80" fill="none" stroke="#2e3e1c" stroke-width="18" opacity=".9"/>
<path d="M562.1 540.3A84 84 0 0 1 626.4 486.3" stroke="#4a6a22" stroke-width="5" fill="none" opacity="1"/>
<path d="M655.6 486.3A84 84 0 0 1 713.7 527.0" stroke="#6a5020" stroke-width="5" fill="none" opacity="1"/>
<path d="M599.0 641.7A84 84 0 0 1 557.0 569.0" stroke="#2a3a70" stroke-width="5" fill="none" opacity="1"/>
<path d="M725.0 569.0A84 84 0 0 1 683.0 641.7" stroke="#3a6a28" stroke-width="5" fill="none" opacity="1"/>
<path d="M669.7 647.9A84 84 0 0 1 612.3 647.9" stroke="#5a3a20" stroke-width="5" fill="none" opacity="1"/>
<path d="M580.4 604.0A70 70 0 0 1 596.0 515.4" stroke="#30307a" stroke-width="6" fill="none" opacity="1"/>
<path d="M606.0 508.4A70 70 0 0 1 676.0 508.4" stroke="#6a4a20" stroke-width="6" fill="none" opacity="1"/>
<path d="M686.0 515.4A70 70 0 0 1 706.8 592.9" stroke="#2a5a30" stroke-width="6" fill="none" opacity="1"/>
<path d="M701.6 604.0A70 70 0 0 1 641.0 639.0" stroke="#4a2a60" stroke-width="6" fill="none" opacity="1"/>
<path d="M628.8 637.9A70 70 0 0 1 587.4 614.0" stroke="#3a5a20" stroke-width="6" fill="none" opacity="1"/>
<path d="M583.9 579.1A58 58 0 0 1 621.2 514.5" stroke="#5a4a20" stroke-width="5" fill="none" opacity="1"/>
<path d="M630.9 511.9A58 58 0 0 1 691.2 540.0" stroke="#2a2a6a" stroke-width="5" fill="none" opacity="1"/>
<path d="M695.5 549.2A58 58 0 0 1 678.3 613.4" stroke="#4a6020" stroke-width="5" fill="none" opacity="1"/>
<path d="M670.0 619.2A58 58 0 0 1 586.5 588.8" stroke="#603040" stroke-width="5" fill="none" opacity="1"/>
<circle cx="641" cy="569" r="46" fill="none" stroke="#0a0a0a" stroke-width="7"/>
<circle cx="641" cy="569" r="42" fill="#2a2c22"/>
<ellipse cx="670.4" cy="575.0" rx="8" ry="6" fill="#3a5a22" transform="rotate(11 670.4 575.0)"/>
<ellipse cx="663.5" cy="588.9" rx="8" ry="6" fill="#4a2a5a" transform="rotate(41 663.5 588.9)"/>
<ellipse cx="650.5" cy="597.4" rx="8" ry="6" fill="#4a5a20" transform="rotate(71 650.5 597.4)"/>
<ellipse cx="635.0" cy="598.4" rx="8" ry="6" fill="#5a2a22" transform="rotate(101 635.0 598.4)"/>
<ellipse cx="621.1" cy="591.5" rx="8" ry="6" fill="#2a5a30" transform="rotate(131 621.1 591.5)"/>
<ellipse cx="612.6" cy="578.5" rx="8" ry="6" fill="#30306a" transform="rotate(161 612.6 578.5)"/>
<ellipse cx="611.6" cy="563.0" rx="8" ry="6" fill="#5a5a1a" transform="rotate(191 611.6 563.0)"/>
<ellipse cx="618.5" cy="549.1" rx="8" ry="6" fill="#5a2a3a" transform="rotate(221 618.5 549.1)"/>
<ellipse cx="631.5" cy="540.6" rx="8" ry="6" fill="#2a4a5a" transform="rotate(251 631.5 540.6)"/>
<ellipse cx="647.0" cy="539.6" rx="8" ry="6" fill="#5a3a1a" transform="rotate(281 647.0 539.6)"/>
<ellipse cx="660.9" cy="546.5" rx="8" ry="6" fill="#3a2a5a" transform="rotate(311 660.9 546.5)"/>
<ellipse cx="669.4" cy="559.5" rx="8" ry="6" fill="#2a5a22" transform="rotate(341 669.4 559.5)"/>
<ellipse cx="653.3" cy="575.7" rx="7" ry="5" fill="#3a5a22" transform="rotate(29 653.3 575.7)"/>
<ellipse cx="641.3" cy="583.0" rx="7" ry="5" fill="#30306a" transform="rotate(89 641.3 583.0)"/>
<ellipse cx="629.0" cy="576.3" rx="7" ry="5" fill="#3a2a5a" transform="rotate(149 629.0 576.3)"/>
<ellipse cx="628.7" cy="562.3" rx="7" ry="5" fill="#5a2a22" transform="rotate(209 628.7 562.3)"/>
<ellipse cx="640.7" cy="555.0" rx="7" ry="5" fill="#2a4a5a" transform="rotate(269 640.7 555.0)"/>
<ellipse cx="653.0" cy="561.7" rx="7" ry="5" fill="#4a2a5a" transform="rotate(329 653.0 561.7)"/>
<ellipse cx="468" cy="606" rx="9" ry="22" fill="#6a3070"/>
<ellipse cx="468" cy="618" rx="8" ry="11" fill="#9a4a20"/>
<ellipse cx="622" cy="598" rx="12" ry="11" fill="#3a2a60"/>
<ellipse cx="730" cy="596" rx="22" ry="14" fill="#2a2a88"/>
<ellipse cx="814" cy="606" rx="9" ry="22" fill="#3a8a38"/>
<ellipse cx="609" cy="440" rx="21" ry="34" fill="#4a48a8"/>
<ellipse cx="675" cy="438" rx="21" ry="32" fill="#5048a8"/>
<rect x="630" y="411" width="14" height="110" fill="#403c20"/>
<circle cx="530" cy="429" r="106" fill="#181c60"/>
<g clip-path="url(#cTL)">
<ellipse cx="448" cy="430" rx="14" ry="22" fill="#2828a0"/>
<ellipse cx="444" cy="452" rx="9" ry="12" fill="#40a040"/>
<ellipse cx="468" cy="463" rx="15" ry="24" fill="#b83030" transform="rotate(-25 468 463)"/>
<ellipse cx="516" cy="419" rx="11" ry="8" fill="#a03070"/>
<ellipse cx="540" cy="422" rx="12" ry="9" fill="#3030b0"/>
<ellipse cx="495" cy="420" rx="12" ry="9" fill="#606020"/>
<ellipse cx="515" cy="470" rx="45" ry="14" fill="#a09040"/>
<ellipse cx="520" cy="462" rx="42" ry="13" fill="#202070"/>
<ellipse cx="480" cy="459" rx="11" ry="14" fill="#3030b8"/>
<ellipse cx="500" cy="449" rx="10" ry="12" fill="#c03050"/>
<ellipse cx="523" cy="451" rx="11" ry="12" fill="#40a040"/>
<ellipse cx="542" cy="452" rx="10" ry="11" fill="#808050"/>
<ellipse cx="563" cy="446" rx="10" ry="12" fill="#303090"/>
<ellipse cx="520" cy="488" rx="42" ry="9" fill="#2020c0"/>
<ellipse cx="472" cy="504" rx="27" ry="19" fill="#c0c040" transform="rotate(25 472 504)"/>
<ellipse cx="530" cy="514" rx="33" ry="21" fill="#48b040"/>
<ellipse cx="571" cy="486" rx="18" ry="19" fill="#c03058"/>
<ellipse cx="590" cy="505" rx="30" ry="25" fill="#4a3c90" transform="rotate(-30 590 505)"/>
<ellipse cx="609" cy="440" rx="21" ry="34" fill="#4a48a8"/>
<ellipse cx="588" cy="440" rx="8" ry="40" fill="#101040"/>
</g>
<circle cx="755" cy="435" r="104" fill="#5a6a22"/>
<g clip-path="url(#cTR)">
<ellipse cx="760" cy="420" rx="60" ry="20" fill="#8a9a38"/>
<ellipse cx="730" cy="425" rx="14" ry="10" fill="#a0a040"/>
<ellipse cx="790" cy="425" rx="14" ry="10" fill="#60a040"/>
<ellipse cx="675" cy="438" rx="21" ry="32" fill="#5048a8"/>
<ellipse cx="700" cy="440" rx="8" ry="30" fill="#101010"/>
<ellipse cx="740" cy="452" rx="14" ry="12" fill="#4040a8"/>
<ellipse cx="765" cy="447" rx="12" ry="12" fill="#c06020"/>
<ellipse cx="784" cy="456" rx="13" ry="14" fill="#50b040"/>
<ellipse cx="807" cy="459" rx="11" ry="13" fill="#b0b040"/>
<ellipse cx="774" cy="478" rx="42" ry="7" fill="#3030b8"/>
<ellipse cx="780" cy="487" rx="18" ry="7" fill="#c0c030"/>
<ellipse cx="690" cy="463" rx="12" ry="10" fill="#c0c040"/>
<ellipse cx="705" cy="488" rx="23" ry="20" fill="#50b030" transform="rotate(30 705 488)"/>
<ellipse cx="755" cy="512" rx="31" ry="21" fill="#d04020"/>
<ellipse cx="811" cy="503" rx="31" ry="12" fill="#5040c0" transform="rotate(-25 811 503)"/>
<ellipse cx="836" cy="450" rx="10" ry="20" fill="#c05020"/>
<ellipse cx="818" cy="470" rx="9" ry="25" fill="#40a040" transform="rotate(20 818 470)"/>
<ellipse cx="740" cy="536" rx="90" ry="10" fill="#405020"/>
</g>
<circle cx="533" cy="712" r="103" fill="#38c028"/>
<g clip-path="url(#cBL)">
<circle cx="533" cy="712" r="92" fill="none" stroke="#50d030" stroke-width="10"/>
<circle cx="533" cy="712" r="80" fill="none" stroke="#209018" stroke-width="6"/>
<ellipse cx="534" cy="645" rx="27" ry="16" fill="#40a078"/>
<ellipse cx="480" cy="660" rx="22" ry="14" fill="#70b838" transform="rotate(-20 480 660)"/>
<ellipse cx="590" cy="665" rx="22" ry="24" fill="#50b040"/>
<ellipse cx="533" cy="700" rx="60" ry="30" fill="#288820"/>
<ellipse cx="500" cy="690" rx="20" ry="14" fill="#98a030"/>
<ellipse cx="533" cy="680" rx="26" ry="10" fill="#a08030"/>
<ellipse cx="480" cy="708" rx="14" ry="16" fill="#50b040"/>
<ellipse cx="520" cy="712" rx="14" ry="14" fill="#3080a0"/>
<ellipse cx="560" cy="712" rx="14" ry="14" fill="#60a040"/>
<ellipse cx="445" cy="700" rx="10" ry="20" fill="#3060a0"/>
</g>
<circle cx="752" cy="706" r="97" fill="#a82010"/>
<g clip-path="url(#cBR)">
<circle cx="752" cy="706" r="88" fill="none" stroke="#c04018" stroke-width="8"/>
<ellipse cx="706" cy="665" rx="20" ry="20" fill="#9030a0"/>
<ellipse cx="755" cy="645" rx="28" ry="17" fill="#d05030"/>
<ellipse cx="808" cy="654" rx="25" ry="14" fill="#a0a040" transform="rotate(20 808 654)"/>
<ellipse cx="675" cy="700" rx="18" ry="26" fill="#60b030"/>
<ellipse cx="755" cy="700" rx="55" ry="30" fill="#901818"/>
<ellipse cx="740" cy="690" rx="30" ry="12" fill="#c0a030"/>
<ellipse cx="790" cy="690" rx="20" ry="15" fill="#a040a0"/>
<ellipse cx="760" cy="712" rx="18" ry="10" fill="#d06020"/>
<ellipse cx="720" cy="712" rx="15" ry="12" fill="#60a040"/>
<ellipse cx="833" cy="705" rx="11" ry="20" fill="#e08020"/>
</g>
<path d="M440 520Q530 560 630 490" stroke="#201a58" stroke-width="5" fill="none"/>
<path d="M660 495Q755 560 844 505" stroke="#302a10" stroke-width="5" fill="none"/>
</g>
<rect x="437" y="411" width="407" height="309" filter="url(#noise)" opacity=".35"/>
<rect x="640" y="411" width="4" height="309" fill="#000"/>
<rect x="437" y="562" width="407" height="12" fill="#000" opacity=".7"/>
<rect x="437" y="566" width="407" height="5" fill="#000"/>
<rect x="437" y="556" width="150" height="24" fill="#000" opacity=".45"/>
<rect x="697" y="556" width="147" height="24" fill="#000" opacity=".45"/>
</g>
<path d="M429.5 412L437 422M429.5 425L437 440M437 425L429.5 445M437 455L430 462M429.5 475L437 482M429.5 478L437 490M437 490L429.5 498M429.5 648L437 660M437 664L429.5 675M437 682L429.5 695M429.5 703L437 715M429.5 640V720" stroke="#e8e08a" stroke-width="1" fill="none"/>
<path d="M845 421L853 412M845 438L853 428M845 438L853 445M845 466L853 455M845 482L853 470M845 487L853 478M845 487L853 500M845 660L853 648M845 660L853 676M845 690L853 676M845 690L853 710M845 715L853 705M845.5 411V720" stroke="#e8e08a" stroke-width="1" fill="none"/>
</svg>
<div style="left:428px;top:99px;width:1px;height:622px;background:#fff"></div>
<div style="left:1px;top:410px;width:854px;height:1px;background:#fff"></div>
<div style="left:854px;top:98px;width:1px;height:623px;background:#fff"></div>
<div style="left:0px;top:720px;width:856px;height:1px;background:#fff"></div>
<div style="left:855px;top:98px;width:1px;height:623px;background:#d4d0c8"></div>
<div style="left:856px;top:118px;width:165px;height:603px;box-shadow:inset 1px 1px #fff,inset -1px 0 #404040,inset -2px 0 #808080"></div>
<div style="left:858px;top:100px;width:41px;height:18px;box-shadow:inset 1px 1px #fff,inset -1px 0 #808080;border-radius:2px 2px 0 0"></div>
<div style="left:858px;top:104.19px;width:41px;white-space:nowrap;font-size:11px;line-height:11px;color:#000;;text-align:center;">Create</div>
<div style="left:944px;top:100px;width:40px;height:18px;box-shadow:inset 0 1px #fff,inset -1px 0 #404040,inset -2px 0 #808080;border-radius:0 2px 0 0"></div>
<div style="left:944px;top:104.19px;width:40px;white-space:nowrap;font-size:11px;line-height:11px;color:#000;;text-align:center;">Select</div>
<div style="left:898px;top:98px;width:46px;height:21px;background:#d4d0c8;box-shadow:inset 1px 1px #fff,inset -1px 0 #404040,inset -2px 0 #808080;border-radius:2px 2px 0 0"></div>
<div style="left:898px;top:102.49px;width:46px;white-space:nowrap;font-size:11px;line-height:11px;color:#000;;text-align:center;">Modify</div>
<div style="left:859px;top:129px;width:158px;height:74px;box-shadow:inset 1px 1px #808080,inset -1px -1px #fff,1px 1px #fff"></div>
<div style="left:865px;top:123px;width:92px;height:12px;background:#d4d0c8"></div>
<div style="left:867px;top:122.09px;white-space:nowrap;font-size:11px;line-height:11px;color:#000;;">Object Description</div>
<div style="left:840px;top:140.69px;width:56px;white-space:nowrap;font-size:11px;line-height:11px;color:#000;;text-align:right;">Name:</div>
<div style="left:840px;top:161.69px;width:56px;white-space:nowrap;font-size:11px;line-height:11px;color:#000;;text-align:right;">Type:</div>
<div style="left:840px;top:182.69px;width:56px;white-space:nowrap;font-size:11px;line-height:11px;color:#000;;text-align:right;">Parent:</div>
<div style="left:901px;top:139px;width:90px;height:16px;box-shadow:inset 1px 1px #808080,inset -1px -1px #fff,inset 2px 2px #404040,inset -2px -2px #d4d0c8;background:#d4d0c8"></div>
<div style="left:904px;top:141.69px;white-space:nowrap;font-size:11px;line-height:11px;color:#000;;">Group005</div>
<div style="left:992px;top:137px;width:24px;height:20px;box-shadow:inset -1px -1px #404040,inset 1px 1px #fff,inset -2px -2px #808080;background:#d4d0c8"></div>
<div style="left:992px;top:141.53px;width:24px;white-space:nowrap;font-size:10px;line-height:10px;color:#000;;text-align:center;">abc</div>
<div style="left:901px;top:160px;width:114px;height:17px;box-shadow:inset 1px 1px #808080,inset -1px -1px #fff,inset 2px 2px #404040,inset -2px -2px #d4d0c8;background:#d4d0c8"></div>
<div style="left:904px;top:163.19px;white-space:nowrap;font-size:11px;line-height:11px;color:#000;;">Group</div>
<div style="left:901px;top:181px;width:114px;height:17px;box-shadow:inset 1px 1px #808080,inset -1px -1px #fff,inset 2px 2px #404040,inset -2px -2px #d4d0c8;background:#d4d0c8"></div>
<div style="left:856px;top:208px;width:164px;height:213px;box-shadow:inset 1px 1px #fff,inset -1px -1px #808080"></div>
<div style="left:860px;top:220px;width:157px;height:200px;box-shadow:inset 1px 1px #808080,inset -1px -1px #fff,1px 1px #fff"></div>
<div style="left:863px;top:212px;width:151px;height:18px;box-shadow:inset -1px -1px #404040,inset 1px 1px #fff,inset -2px -2px #808080;background:#d4d0c8"></div>
<svg style="left:867px;top:216px" width="14" height="10"><path d="M1 8h11L6.5 1.5z" fill="#000"/></svg>
<div style="left:863px;top:215.69px;width:151px;white-space:nowrap;font-size:11px;line-height:11px;color:#000;padding-left:0px;letter-spacing:-0.2px;text-align:center;">Transformation</div>
<div style="left:864px;top:233px;width:48px;height:19px;box-shadow:inset -1px -1px #404040,inset 1px 1px #fff,inset -2px -2px #808080;background:#d4d0c8"></div>
<div style="left:864px;top:237.69px;width:48px;white-space:nowrap;font-size:11px;line-height:11px;color:#000;;text-align:center;"><u>S</u>cale</div>
<div style="left:915px;top:233px;width:50px;height:19px;box-shadow:inset -1px -1px #404040,inset 1px 1px #fff,inset -2px -2px #808080;background:#d4d0c8"></div>
<div style="left:915px;top:237.69px;width:50px;white-space:nowrap;font-size:11px;line-height:11px;color:#000;;text-align:center;"><u>U</u>-Scale</div>
<div style="left:972px;top:233px;width:38px;height:19px;box-shadow:inset -1px -1px #404040,inset 1px 1px #fff,inset -2px -2px #808080;background:#d4d0c8"></div>
<div style="left:972px;top:237.69px;width:38px;white-space:nowrap;font-size:11px;line-height:11px;color:#000;;text-align:center;">Clear</div>
<div style="left:864px;top:255px;width:45px;height:19px;box-shadow:inset 1px 1px #808080,inset -1px -1px #fff,inset 2px 2px #404040,inset -2px -2px #d4d0c8;background:#fff"></div>
<div style="left:867px;top:259.19px;white-space:nowrap;font-size:11px;line-height:11px;color:#000;;">1.0</div>
<div style="left:916px;top:255px;width:44px;height:19px;box-shadow:inset 1px 1px #808080,inset -1px -1px #fff,inset 2px 2px #404040,inset -2px -2px #d4d0c8;background:#fff"></div>
<div style="left:919px;top:259.19px;white-space:nowrap;font-size:11px;line-height:11px;color:#000;;">1.0</div>
<div style="left:966px;top:255px;width:44px;height:19px;box-shadow:inset 1px 1px #808080,inset -1px -1px #fff,inset 2px 2px #404040,inset -2px -2px #d4d0c8;background:#fff"></div>
<div style="left:969px;top:259.19px;white-space:nowrap;font-size:11px;line-height:11px;color:#000;;">1.0</div>
<div style="left:864px;top:280px;width:99px;height:19px;box-shadow:inset -1px -1px #404040,inset 1px 1px #fff,inset -2px -2px #808080;background:#d4d0c8"></div>
<div style="left:864px;top:284.69px;width:99px;white-space:nowrap;font-size:11px;line-height:11px;color:#000;;text-align:center;"><u>R</u>otate</div>
<div style="left:972px;top:280px;width:38px;height:19px;box-shadow:inset -1px -1px #404040,inset 1px 1px #fff,inset -2px -2px #808080;background:#d4d0c8"></div>
<div style="left:972px;top:284.69px;width:38px;white-space:nowrap;font-size:11px;line-height:11px;color:#000;;text-align:center;">Clear</div>
<div style="left:864px;top:303px;width:45px;height:19px;box-shadow:inset 1px 1px #808080,inset -1px -1px #fff,inset 2px 2px #404040,inset -2px -2px #d4d0c8;background:#fff"></div>
<div style="left:867px;top:307.19px;white-space:nowrap;font-size:11px;line-height:11px;color:#000;;">0.0</div>
<div style="left:916px;top:303px;width:44px;height:19px;box-shadow:inset 1px 1px #808080,inset -1px -1px #fff,inset 2px 2px #404040,inset -2px -2px #d4d0c8;background:#fff"></div>
<div style="left:919px;top:307.19px;white-space:nowrap;font-size:11px;line-height:11px;color:#000;;">0.0</div>
<div style="left:966px;top:303px;width:44px;height:19px;box-shadow:inset 1px 1px #808080,inset -1px -1px #fff,inset 2px 2px #404040,inset -2px -2px #d4d0c8;background:#fff"></div>
<div style="left:969px;top:307.19px;white-space:nowrap;font-size:11px;line-height:11px;color:#000;;">0.0</div>
<div style="left:864px;top:328px;width:99px;height:19px;box-shadow:inset 1px 1px #404040,inset -1px -1px #fff,inset 2px 2px #808080,inset -2px -2px #d4d0c8;background-color:#fff;background-image:linear-gradient(45deg,#d4d0c8 25%,transparent 25%,transparent 75%,#d4d0c8 75%),linear-gradient(45deg,#d4d0c8 25%,transparent 25%,transparent 75%,#d4d0c8 75%);background-size:2px 2px;background-position:0 0,1px 1px"></div>
<div style="left:864px;top:332.69px;width:99px;white-space:nowrap;font-size:11px;line-height:11px;color:#000;;text-align:center;"><u>T</u>ranslate</div>
<div style="left:972px;top:328px;width:38px;height:19px;box-shadow:inset -1px -1px #404040,inset 1px 1px #fff,inset -2px -2px #808080;background:#d4d0c8"></div>
<div style="left:972px;top:332.69px;width:38px;white-space:nowrap;font-size:11px;line-height:11px;color:#000;;text-align:center;">Clear</div>
<div style="left:864px;top:350px;width:45px;height:19px;box-shadow:inset 1px 1px #808080,inset -1px -1px #fff,inset 2px 2px #404040,inset -2px -2px #d4d0c8;background:#fff"></div>
<div style="left:867px;top:354.19px;white-space:nowrap;font-size:11px;line-height:11px;color:#000;;">0.0</div>
<div style="left:916px;top:350px;width:44px;height:19px;box-shadow:inset 1px 1px #808080,inset -1px -1px #fff,inset 2px 2px #404040,inset -2px -2px #d4d0c8;background:#fff"></div>
<div style="left:919px;top:354.19px;white-space:nowrap;font-size:11px;line-height:11px;color:#000;;">-7.7</div>
<div style="left:966px;top:350px;width:44px;height:19px;box-shadow:inset 1px 1px #808080,inset -1px -1px #fff,inset 2px 2px #404040,inset -2px -2px #d4d0c8;background:#fff"></div>
<div style="left:969px;top:354.19px;white-space:nowrap;font-size:11px;line-height:11px;color:#000;;">-0.2</div>
<div style="left:864px;top:374px;width:146px;height:18px;box-shadow:inset -1px -1px #404040,inset 1px 1px #fff,inset -2px -2px #808080;background:#d4d0c8"></div>
<div style="left:864px;top:377.69px;width:146px;white-space:nowrap;font-size:11px;line-height:11px;color:#000;letter-spacing:-0.25px;text-align:center;">Local Coordinates</div>
<div style="left:864px;top:398px;width:95px;height:19px;box-shadow:inset -1px -1px #404040,inset 1px 1px #fff,inset -2px -2px #808080;background:#d4d0c8"></div>
<div style="left:890px;top:402.69px;white-space:nowrap;font-size:11px;line-height:11px;color:#000;;">Limits</div>
<svg style="left:924px;top:403px" width="12" height="8"><path d="M0 0h11L5.5 6.5z" fill="#000"/></svg>
<div style="left:966px;top:398px;width:44px;height:19px;box-shadow:inset -1px -1px #404040,inset 1px 1px #fff,inset -2px -2px #808080;background:#d4d0c8"></div>
<div style="left:966px;top:402.69px;width:44px;white-space:nowrap;font-size:11px;line-height:11px;color:#000;;text-align:center;">Freeze</div>
<div style="left:868px;top:428px;width:142px;height:19px;box-shadow:inset -1px -1px #404040,inset 1px 1px #fff,inset -2px -2px #808080;background:#d4d0c8"></div>
<div style="left:869px;top:432.69px;width:142px;white-space:nowrap;font-size:11px;line-height:11px;color:#fff;;text-align:center;">Select Parent</div>
<div style="left:868px;top:431.69px;width:142px;white-space:nowrap;font-size:11px;line-height:11px;color:#808080;;text-align:center;">Select Parent</div>
<div style="left:856px;top:447px;width:164px;height:195px;box-shadow:inset 1px 1px #fff,inset -1px -1px #808080"></div>
<div style="left:860px;top:460px;width:157px;height:180px;box-shadow:inset 1px 1px #808080,inset -1px -1px #fff,1px 1px #fff"></div>
<div style="left:863px;top:451px;width:151px;height:18px;box-shadow:inset -1px -1px #404040,inset 1px 1px #fff,inset -2px -2px #808080;background:#d4d0c8"></div>
<svg style="left:867px;top:455px" width="14" height="10"><path d="M1 8h11L6.5 1.5z" fill="#000"/></svg>
<div style="left:863px;top:454.69px;width:151px;white-space:nowrap;font-size:11px;line-height:11px;color:#000;padding-left:3px;letter-spacing:-0.2px;text-align:center;">Group Parameters</div>
<div style="left:864px;top:473px;width:148px;height:139px;box-shadow:inset 1px 1px #808080,inset -1px -1px #fff,inset 2px 2px #404040,inset -2px -2px #d4d0c8;background:#fff"></div>
<svg style="left:867px;top:476px" width="15" height="14" viewBox="0 0 15 14"><rect width="15" height="14" fill="#10e010"/><text x="7.5" y="12" font-family="Liberation Sans" font-weight="bold" font-size="13" text-anchor="middle" fill="#000">G</text></svg>
<div style="left:886px;top:478.19px;white-space:nowrap;font-size:11px;line-height:11px;color:#000;;">Group005</div>
<svg style="left:864px;top:473px" width="148" height="90" viewBox="864 473 148 90"><path d="M874.5 490V548" stroke="#808080" stroke-dasharray="1 1"/><path d="M879 499.5H886" stroke="#808080" stroke-dasharray="1 1"/><rect x="870.5" y="495.5" width="8" height="8" fill="#fff" stroke="#808080"/><path d="M872.5 499.5h4M874.5 497.5v4" stroke="#000"/><path d="M879 515.5H886" stroke="#808080" stroke-dasharray="1 1"/><rect x="870.5" y="511.5" width="8" height="8" fill="#fff" stroke="#808080"/><path d="M872.5 515.5h4M874.5 513.5v4" stroke="#000"/><path d="M879 531.5H886" stroke="#808080" stroke-dasharray="1 1"/><rect x="870.5" y="527.5" width="8" height="8" fill="#fff" stroke="#808080"/><path d="M872.5 531.5h4M874.5 529.5v4" stroke="#000"/><path d="M879 547.5H886" stroke="#808080" stroke-dasharray="1 1"/><rect x="870.5" y="543.5" width="8" height="8" fill="#fff" stroke="#808080"/><path d="M872.5 547.5h4M874.5 545.5v4" stroke="#000"/></svg>
<svg style="left:886px;top:492px" width="15" height="14" viewBox="0 0 15 14"><rect width="15" height="14" fill="#10e010"/><text x="7.5" y="12" font-family="Liberation Sans" font-weight="bold" font-size="13" text-anchor="middle" fill="#000">G</text></svg>
<div style="left:905.5px;top:494.19px;white-space:nowrap;font-size:11px;line-height:11px;color:#000;;">Group001</div>
<svg style="left:886px;top:508px" width="15" height="14" viewBox="0 0 15 14"><rect width="15" height="14" fill="#10e010"/><text x="7.5" y="12" font-family="Liberation Sans" font-weight="bold" font-size="13" text-anchor="middle" fill="#000">G</text></svg>
<div style="left:905.5px;top:510.19px;white-space:nowrap;font-size:11px;line-height:11px;color:#000;;">Group002</div>
<svg style="left:886px;top:524px" width="15" height="14" viewBox="0 0 15 14"><rect width="15" height="14" fill="#10e010"/><text x="7.5" y="12" font-family="Liberation Sans" font-weight="bold" font-size="13" text-anchor="middle" fill="#000">G</text></svg>
<div style="left:905.5px;top:526.19px;white-space:nowrap;font-size:11px;line-height:11px;color:#000;;">Group003</div>
<svg style="left:886px;top:540px" width="15" height="14" viewBox="0 0 15 14"><rect width="15" height="14" fill="#10e010"/><text x="7.5" y="12" font-family="Liberation Sans" font-weight="bold" font-size="13" text-anchor="middle" fill="#000">G</text></svg>
<div style="left:905.5px;top:542.19px;white-space:nowrap;font-size:11px;line-height:11px;color:#000;;">Group004</div>
<div style="left:863px;top:618px;width:72px;height:18px;box-shadow:inset -1px -1px #404040,inset 1px 1px #fff,inset -2px -2px #808080;background:#d4d0c8"></div>
<div style="left:863px;top:621.69px;width:72px;white-space:nowrap;font-size:11px;line-height:11px;color:#000;;text-align:center;">Add</div>
<div style="left:944px;top:618px;width:68px;height:18px;box-shadow:inset -1px -1px #404040,inset 1px 1px #fff,inset -2px -2px #808080;background:#d4d0c8"></div>
<div style="left:945px;top:622.69px;width:68px;white-space:nowrap;font-size:11px;line-height:11px;color:#fff;;text-align:center;">Ungroup</div>
<div style="left:944px;top:621.69px;width:68px;white-space:nowrap;font-size:11px;line-height:11px;color:#808080;;text-align:center;">Ungroup</div>
<div style="left:856px;top:647px;width:164px;height:74px;box-shadow:inset 1px 1px #fff,inset -1px 0 #808080"></div>
<div style="left:860px;top:659px;width:157px;height:70px;box-shadow:inset 1px 1px #808080,inset -1px -1px #fff,1px 1px #fff"></div>
<div style="left:863px;top:651px;width:151px;height:17px;box-shadow:inset -1px -1px #404040,inset 1px 1px #fff,inset -2px -2px #808080;background:#d4d0c8"></div>
<svg style="left:867px;top:654px" width="14" height="10"><path d="M1 8h11L6.5 1.5z" fill="#000"/></svg>
<div style="left:863px;top:653.69px;width:151px;white-space:nowrap;font-size:11px;line-height:11px;color:#000;padding-left:6px;letter-spacing:-0.3px;text-align:center;">Material, Color, Visibility</div>
<div style="left:863px;top:674px;width:21px;height:20px;box-shadow:inset -1px -1px #404040,inset 1px 1px #fff,inset -2px -2px #808080;background:#d4d0c8"></div>
<svg style="left:866px;top:677px" width="16" height="15" viewBox="0 0 16 15"><circle cx="4" cy="4" r="3.5" fill="#1010d0"/><circle cx="12" cy="4" r="3.5" fill="#10b010"/><rect x="0" y="8" width="7" height="7" fill="#fff" stroke="#000" stroke-width=".8"/><path d="M2 13l3-3M3 10h2v2" stroke="#000"/><circle cx="12" cy="11.5" r="3" fill="#e00000"/></svg>
<div style="left:888px;top:674px;width:99px;height:20px;box-shadow:inset 1px 1px #808080,inset -1px -1px #fff;background:#d4d0c8"></div>
<div style="left:891px;top:678.69px;white-space:nowrap;font-size:11px;line-height:11px;color:#808080;;">none</div>
<div style="left:992px;top:674px;width:21px;height:20px;box-shadow:inset -1px -1px #404040,inset 1px 1px #fff,inset -2px -2px #808080;background:#d4d0c8"></div>
<svg style="left:995px;top:677px" width="16" height="15" viewBox="0 0 16 15"><circle cx="4" cy="4" r="3.5" fill="#1010d0"/><circle cx="12" cy="4" r="3.5" fill="#10b010"/><path d="M1 14a3 3 0 0 1 6 0" fill="none" stroke="#000"/><circle cx="12" cy="11.5" r="3" fill="#e00000"/></svg>
<div style="left:872px;top:703.69px;white-space:nowrap;font-size:11px;line-height:11px;color:#808080;;">Space:</div>
<div style="left:914px;top:699px;width:97px;height:19px;box-shadow:inset 1px 1px #808080,inset -1px -1px #fff,inset 2px 2px #404040,inset -2px -2px #d4d0c8;background:#d4d0c8"></div>
<div style="left:917px;top:703.19px;white-space:nowrap;font-size:11px;line-height:11px;color:#808080;;">Local</div>
<div style="left:993px;top:701px;width:16px;height:15px;box-shadow:inset -1px -1px #404040,inset 1px 1px #fff,inset -2px -2px #808080;background:#d4d0c8"></div>
<svg style="left:996px;top:705px" width="10" height="6"><path d="M1 1h7L4.5 5z" fill="#808080"/></svg>
<div style="left:1020px;top:118px;width:1px;height:603px;background:#404040"></div>
<div style="left:0px;top:721px;width:1024px;height:20px;background:#d4d0c8"></div>
<div style="left:0px;top:720px;width:1024px;height:1px;background:#fff"></div>
<div style="left:2px;top:726.29px;white-space:nowrap;font-size:11px;line-height:11px;color:#000;;">Ready.</div>
<div style="left:436px;top:723px;width:5px;height:17px;box-shadow:inset 1px 1px #fff,inset -1px -1px #808080"></div>
<div style="left:444px;top:724px;width:90px;height:16px;box-shadow:inset 1px 1px #808080,inset -1px -1px #fff"></div>
<div style="left:444px;top:726.29px;width:90px;white-space:nowrap;font-size:11px;line-height:11px;color:#000;;text-align:center;">808 V (0%)</div>
<div style="left:536px;top:724px;width:89px;height:16px;box-shadow:inset 1px 1px #808080,inset -1px -1px #fff"></div>
<div style="left:536px;top:726.29px;width:89px;white-space:nowrap;font-size:11px;line-height:11px;color:#000;;text-align:center;">1671 E (2%)</div>
<div style="left:628px;top:724px;width:52px;height:16px;box-shadow:inset 1px 1px #808080,inset -1px -1px #fff"></div>
<div style="left:630px;top:726.29px;white-space:nowrap;font-size:11px;line-height:11px;color:#000;;">0.0</div>
<div style="left:682px;top:724px;width:52px;height:16px;box-shadow:inset 1px 1px #808080,inset -1px -1px #fff"></div>
<div style="left:684px;top:726.29px;white-space:nowrap;font-size:11px;line-height:11px;color:#000;;">-21.6646</div>
<div style="left:736px;top:724px;width:51px;height:16px;box-shadow:inset 1px 1px #808080,inset -1px -1px #fff"></div>
<div style="left:738px;top:726.29px;white-space:nowrap;font-size:11px;line-height:11px;color:#000;;">21.3069</div>
<div style="left:790px;top:725px;width:27px;height:15px;box-shadow:inset 1px 1px #808080,inset -1px -1px #fff,inset 2px 2px #000"></div>
<div style="left:791px;top:726.89px;width:27px;white-space:nowrap;font-size:11px;line-height:11px;color:#000;;text-align:center;">100</div>
<div style="left:821px;top:724px;width:27px;height:16px;box-shadow:inset 1px 1px #808080,inset -1px -1px #fff;background-color:#fff;background-image:linear-gradient(45deg,#d4d0c8 25%,transparent 25%,transparent 75%,#d4d0c8 75%),linear-gradient(45deg,#d4d0c8 25%,transparent 25%,transparent 75%,#d4d0c8 75%);background-size:2px 2px;background-position:0 0,1px 1px"></div>
<div style="left:821px;top:726.69px;width:27px;white-space:nowrap;font-size:11px;line-height:11px;color:#000;;text-align:center;">X</div>
<div style="left:853px;top:724px;width:27px;height:16px;box-shadow:inset 1px 1px #808080,inset -1px -1px #fff;background-color:#fff;background-image:linear-gradient(45deg,#d4d0c8 25%,transparent 25%,transparent 75%,#d4d0c8 75%),linear-gradient(45deg,#d4d0c8 25%,transparent 25%,transparent 75%,#d4d0c8 75%);background-size:2px 2px;background-position:0 0,1px 1px"></div>
<div style="left:853px;top:726.69px;width:27px;white-space:nowrap;font-size:11px;line-height:11px;color:#000;;text-align:center;">Y</div>
<div style="left:885px;top:724px;width:27px;height:16px;box-shadow:inset 1px 1px #808080,inset -1px -1px #fff;background-color:#fff;background-image:linear-gradient(45deg,#d4d0c8 25%,transparent 25%,transparent 75%,#d4d0c8 75%),linear-gradient(45deg,#d4d0c8 25%,transparent 25%,transparent 75%,#d4d0c8 75%);background-size:2px 2px;background-position:0 0,1px 1px"></div>
<div style="left:885px;top:726.69px;width:27px;white-space:nowrap;font-size:11px;line-height:11px;color:#000;;text-align:center;">Z</div>
<div style="left:916px;top:724px;width:42px;height:16px;box-shadow:inset 1px 1px #808080,inset -1px -1px #fff"></div>
<div style="left:960px;top:724px;width:26px;height:16px;box-shadow:inset 1px 1px #808080,inset -1px -1px #fff"></div>
<div style="left:988px;top:724px;width:33px;height:16px;box-shadow:inset 1px 1px #808080,inset -1px -1px #fff"></div>
<div style="left:0px;top:741px;width:1024px;height:27px;background:#d4d0c8;box-shadow:inset 0 1px #d4d0c8,inset 0 2px #fff"></div>
<div style="left:2px;top:744px;width:55px;height:22px;box-shadow:inset -1px -1px #404040,inset 1px 1px #fff,inset -2px -2px #808080;background:#d4d0c8"></div>
<svg style="left:6px;top:747px" width="17" height="16" viewBox="0 0 17 16"><path d="M4 2q3-1 5 0v6q-2-1-5 0z" fill="#e02020"/><path d="M10 1q3-1 6 1v6q-3-2-6-1z" fill="#20b020"/><path d="M4 9q3-1 5 0v6q-2-1-5 0z" fill="#2040e0"/><path d="M10 8q3-1 6 1v6q-3-2-6-1z" fill="#f0d000"/><path d="M0 4h3M0 7h3M0 10h3M0 13h3" stroke="#000"/><path d="M9 1v14" stroke="#000"/></svg>
<div style="left:23px;top:750.19px;white-space:nowrap;font-size:11px;line-height:11px;color:#000;font-weight:bold;letter-spacing:0.3px;">Start</div>
<div style="left:64px;top:745px;width:2px;height:20px;box-shadow:inset 1px 1px #fff,inset -1px -1px #808080"></div>
<div style="left:275px;top:745px;width:2px;height:20px;box-shadow:inset 1px 1px #fff,inset -1px -1px #808080"></div>
<div style="left:495px;top:745px;width:2px;height:20px;box-shadow:inset 1px 1px #fff,inset -1px -1px #808080"></div>
<svg style="left:74px;top:747px" width="16" height="16" viewBox="0 0 16 16"><rect x="1" y="3" width="12" height="12" fill="#fff" stroke="#000"/><rect x="2" y="4" width="10" height="10" fill="#40a0c0"/><path d="M5 11l9-9" stroke="#e0c040" stroke-width="2.5"/><path d="M3 8h6" stroke="#fff"/></svg>
<svg style="left:97px;top:747px" width="16" height="16" viewBox="0 0 16 16"><circle cx="8" cy="9" r="5.5" fill="#2060e0"/><circle cx="8" cy="9" r="2.5" fill="#fff"/><path d="M3 9h10" stroke="#fff" stroke-width="1.5"/><path d="M1 12q7-10 14-9" fill="none" stroke="#40a0ff" stroke-width="1.5"/></svg>
<svg style="left:120px;top:747px" width="16" height="16" viewBox="0 0 16 16"><rect x="1" y="3" width="14" height="10" fill="#fff" stroke="#000"/><path d="M2 5q6-4 12 1M14 11q-6 4-12-1" stroke="#2060e0" stroke-width="2" fill="none"/><rect x="11" y="6" width="3" height="3" fill="#e02020"/></svg>
<svg style="left:143px;top:747px" width="16" height="16" viewBox="0 0 16 16"><rect x="2" y="2" width="12" height="12" fill="#fff" stroke="#000"/><path d="M3 13l10-10M3 4l9 9" stroke="#e04040" stroke-width="1.5"/><path d="M4 8h8" stroke="#2040c0" stroke-width="2"/></svg>
<svg style="left:166px;top:747px" width="16" height="16" viewBox="0 0 16 16"><rect x="1" y="3" width="14" height="10" fill="#208080" stroke="#000"/><rect x="3" y="5" width="10" height="5" fill="#40c0c0"/><path d="M3 11h10" stroke="#fff" stroke-dasharray="1 1"/></svg>
<svg style="left:189px;top:747px" width="16" height="16" viewBox="0 0 16 16"><rect x="1" y="1" width="14" height="14" fill="#1020c0"/><rect x="3" y="3" width="10" height="10" fill="#fff"/><path d="M4 4l7 7M4 4h4M4 4v4" stroke="#1020c0" stroke-width="2"/></svg>
<svg style="left:212px;top:747px" width="16" height="16" viewBox="0 0 16 16"><rect x="1" y="1" width="14" height="14" fill="#f0c000"/><path d="M5 3l8 5-8 5z" fill="#4040c0"/></svg>
<svg style="left:235px;top:747px" width="16" height="16" viewBox="0 0 16 16"><path d="M3 13l10-11" stroke="#000" stroke-width="3"/><path d="M3 13l10-11" stroke="#f0e000" stroke-width="2"/><path d="M2 8l5 5" stroke="#fff" stroke-width="2"/></svg>
<div style="left:284px;top:750.19px;white-space:nowrap;font-size:11px;line-height:11px;color:#000;;">Address</div>
<div style="left:327px;top:745px;width:113px;height:20px;box-shadow:inset 1px 1px #808080,inset -1px -1px #fff,inset 2px 2px #404040,inset -2px -2px #d4d0c8;background:#fff"></div>
<svg style="left:331px;top:750px" width="16" height="10" viewBox="0 0 16 10"><rect x="0.5" y="1.5" width="14" height="7" rx="2" fill="#c0c0c0" stroke="#404040"/><path d="M2 4h11" stroke="#fff"/></svg>
<div style="left:350px;top:750.19px;white-space:nowrap;font-size:11px;line-height:11px;color:#000;;">c:\</div>
<div style="left:423px;top:747px;width:16px;height:16px;box-shadow:inset -1px -1px #404040,inset 1px 1px #fff,inset -2px -2px #808080;background:#d4d0c8"></div>
<svg style="left:427px;top:753px" width="8" height="5"><path d="M0 0h7L3.5 4z" fill="#000"/></svg>
<svg style="left:451px;top:747px" width="16" height="16" viewBox="0 0 16 16"><path d="M4 15q-3-6 2-9h5" fill="none" stroke="#000" stroke-width="3"/><path d="M4 15q-3-6 2-9h5" fill="none" stroke="#fff" stroke-width="1.3"/><path d="M10 2l5 4-5 4z" fill="#fff" stroke="#000"/></svg>
<div style="left:466px;top:750.19px;white-space:nowrap;font-size:11px;line-height:11px;color:#000;;">Go</div>
<div style="left:501px;top:744px;width:62px;height:22px;box-shadow:inset 1px 1px #404040,inset -1px -1px #fff,inset 2px 2px #808080,inset -2px -2px #d4d0c8;background-color:#fff;background-image:linear-gradient(45deg,#d4d0c8 25%,transparent 25%,transparent 75%,#d4d0c8 75%),linear-gradient(45deg,#d4d0c8 25%,transparent 25%,transparent 75%,#d4d0c8 75%);background-size:2px 2px;background-position:0 0,1px 1px"></div>
<svg style="left:506px;top:748px" width="16" height="16" viewBox="0 0 16 16"><rect width="16" height="16" fill="#fff"/><rect x="1.5" y="1.5" width="5.5" height="4.5" fill="#000"/><rect x="8.5" y="1.5" width="5.5" height="4.5" fill="#000"/><rect x="1.5" y="7" width="5.5" height="4.5" fill="#000"/><rect x="8.5" y="7" width="5.5" height="4.5" fill="#000"/><rect x="1.5" y="12.5" width="13" height="2.5" fill="#d8d020"/></svg>
<div style="left:523px;top:750.69px;white-space:nowrap;font-size:11px;line-height:11px;color:#000;font-weight:bold;">Mor...</div>
<div style="left:566px;top:744px;width:61px;height:22px;box-shadow:inset -1px -1px #404040,inset 1px 1px #fff,inset -2px -2px #808080;background:#d4d0c8"></div>
<svg style="left:570px;top:747px" width="16" height="16" viewBox="0 0 16 16"><rect x="1" y="1" width="14" height="3" fill="#000"/><rect x="1" y="5" width="14" height="3" fill="#000"/><rect x="1" y="10" width="8" height="5" fill="#000"/><rect x="9" y="9" width="6" height="6" fill="#fff" stroke="#000"/></svg>
<div style="left:587px;top:750.19px;white-space:nowrap;font-size:11px;line-height:11px;color:#000;;">POV-...</div>
<div style="left:630px;top:744px;width:61px;height:22px;box-shadow:inset -1px -1px #404040,inset 1px 1px #fff,inset -2px -2px #808080;background:#d4d0c8"></div>
<svg style="left:634px;top:747px" width="16" height="16" viewBox="0 0 16 16"><path d="M1 4h5l1 1h7v9H1z" fill="#f0e080" stroke="#000"/><path d="M1 14l2-6h12l-2 6z" fill="#e0d060" stroke="#000"/></svg>
<div style="left:651px;top:750.19px;white-space:nowrap;font-size:11px;line-height:11px;color:#000;;">C:\Pr...</div>
<div style="left:694px;top:744px;width:61px;height:22px;box-shadow:inset -1px -1px #404040,inset 1px 1px #fff,inset -2px -2px #808080;background:#d4d0c8"></div>
<svg style="left:698px;top:747px" width="16" height="16" viewBox="0 0 16 16"><rect x="1" y="3" width="14" height="10" fill="#fff" stroke="#000"/><path d="M2 5q6-4 12 1M14 11q-6 4-12-1" stroke="#2060e0" stroke-width="2" fill="none"/><rect x="11" y="6" width="3" height="3" fill="#e02020"/></svg>
<div style="left:715px;top:750.19px;white-space:nowrap;font-size:11px;line-height:11px;color:#000;;">povr...</div>
<div style="left:758px;top:744px;width:61px;height:22px;box-shadow:inset -1px -1px #404040,inset 1px 1px #fff,inset -2px -2px #808080;background:#d4d0c8"></div>
<svg style="left:762px;top:747px" width="16" height="16" viewBox="0 0 16 16"><rect x="3" y="5" width="11" height="10" fill="#fff" stroke="#000"/><path d="M3 2l4 6M8 1l1 7M12 2l-3 6" stroke="#e040a0" stroke-width="1.5"/><path d="M5 1l4 7" stroke="#2040c0"/></svg>
<div style="left:779px;top:750.19px;white-space:nowrap;font-size:11px;line-height:11px;color:#000;;">untitl...</div>
<div style="left:822px;top:744px;width:61px;height:22px;box-shadow:inset -1px -1px #404040,inset 1px 1px #fff,inset -2px -2px #808080;background:#d4d0c8"></div>
<svg style="left:826px;top:747px" width="16" height="16" viewBox="0 0 16 16"><path d="M2 4h9l3 3v8H2z" fill="#f0f0a0" stroke="#000"/><circle cx="12" cy="3" r="2.5" fill="#e02020"/><path d="M12 4l-4 5" stroke="#000"/></svg>
<div style="left:843px;top:750.19px;white-space:nowrap;font-size:11px;line-height:11px;color:#000;;">I fou...</div>
<div style="left:891px;top:744px;width:131px;height:22px;box-shadow:inset 1px 1px #808080,inset -1px -1px #fff"></div>
<svg style="left:896px;top:747px" width="56" height="16" viewBox="0 0 56 16"><path d="M1 10l9-9 5 5-9 9z" fill="#fff" stroke="#000"/><path d="M3 11l5-8h3l-3 4h4l-7 8 2-4z" fill="#f0e020" stroke="#000" stroke-width=".6"/><path d="M19 6h3l4-4v12l-4-4h-3z" fill="#f0f0a0" stroke="#000"/><path d="M28 5l2-1M28 8h3M28 11l2 1" stroke="#c0c0c0"/><circle cx="44" cy="5" r="3.5" fill="#e0e0f0" stroke="#208080"/><path d="M36 14q0-6 8-6q8 0 8 6z" fill="#20a0a0"/><rect x="44" y="9" width="7" height="7" fill="#e02020"/><path d="M45 10l5 5M50 10l-5 5" stroke="#fff"/></svg>
<div style="left:967px;top:750.69px;white-space:nowrap;font-size:11px;line-height:11px;color:#000;letter-spacing:-0.3px;">7:22 PM</div>
</body></html>
